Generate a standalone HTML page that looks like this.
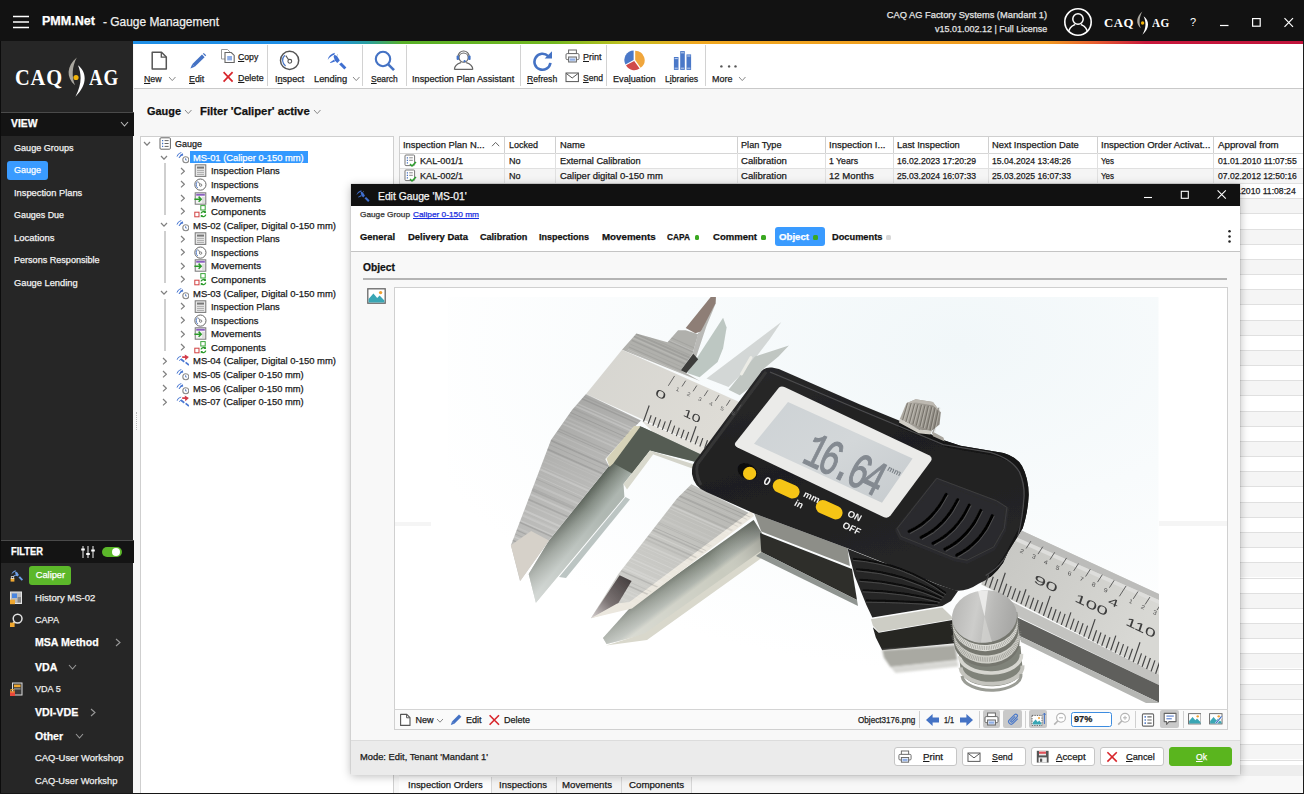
<!DOCTYPE html>
<html lang="en"><head><meta charset="utf-8"><title>PMM.Net - Gauge Management</title>
<style>
html,body{margin:0;padding:0}
body{width:1304px;height:794px;overflow:hidden;position:relative;background:#f7f7f7;font-family:"Liberation Sans", sans-serif;}
body>div,body>svg,body>span{position:absolute;display:block}
span.t{white-space:nowrap;transform-origin:0 50%;}
u{text-decoration:underline;text-underline-offset:1px}
</style></head>
<body>
<div style="left:0px;top:0px;width:1304px;height:41px;background:#121212;"></div>
<svg style="left:13px;top:15px;" width="17" height="14" viewBox="0 0 17 14"><path d="M0 1.5H16M0 7H16M0 12.5H16" stroke="#fff" stroke-width="1.6"/></svg>
<span class="t" id="t0" style="left:42px;top:13.33px;font-size:12.7px;line-height:17px;font-weight:700;color:#fff;transform:scaleX(0.9892);-webkit-text-stroke:0.25px;">PMM.Net</span>
<span class="t" id="t1" style="left:103px;top:13.84px;font-size:12.5px;line-height:16px;font-weight:400;color:#f0f0f0;transform:scaleX(0.9539);-webkit-text-stroke:0.25px;">- Gauge Management</span>
<span class="t" id="t2" style="right:257px;transform-origin:100% 50%;top:9.48px;font-size:9.3px;line-height:13px;font-weight:400;color:#e4e4e4;-webkit-text-stroke:0.25px;">CAQ AG Factory Systems (Mandant 1)</span>
<span class="t" id="t3" style="right:257px;transform-origin:100% 50%;top:23.48px;font-size:9.3px;line-height:13px;font-weight:400;color:#e4e4e4;transform:scaleX(0.9645);-webkit-text-stroke:0.25px;">v15.01.002.12 | Full License</span>
<svg style="left:1063px;top:7px;" width="30" height="30" viewBox="0 0 30 30"><defs><clipPath id="uc"><circle cx="15" cy="15" r="13"/></clipPath></defs><circle cx="15" cy="15" r="13.2" fill="none" stroke="#fff" stroke-width="1.6"/><circle cx="15" cy="12" r="5.2" fill="none" stroke="#fff" stroke-width="1.5"/><path d="M5.5 26 C6 19.5 10 18.5 12 17.5 M24.5 26 C24 19.5 20 18.5 18 17.5" fill="none" stroke="#fff" stroke-width="1.5" clip-path="url(#uc)"/></svg>
<span class="t" id="t4" style="left:1104.2px;top:13.59px;font-size:13.5px;line-height:18px;font-weight:700;color:#fff;transform:scaleX(0.9460);font-family:'Liberation Serif',serif;letter-spacing:0.5px;">CAQ</span>
<span class="t" id="t5" style="left:1151.8px;top:13.59px;font-size:13.5px;line-height:18px;font-weight:700;color:#fff;transform:scaleX(0.8282);font-family:'Liberation Serif',serif;letter-spacing:0.5px;">AG</span>
<svg style="left:1135px;top:11px;" width="16" height="24" viewBox="0 0 16 24"><path d="M7.4 0.5 C1 6 0.6 12.8 5.8 17.2 C3.8 12 4.2 6 7.4 0.5Z" fill="#aaa79f"/><path d="M8.6 5.3 C14.6 9.5 14.9 17.5 7.4 23.7 C11.2 17.5 11.4 11 8.6 5.3Z" fill="#fff"/><circle cx="7.6" cy="12" r="1.7" fill="#f3b50a"/></svg>
<span class="t" id="t6" style="left:1190px;top:14.91px;font-size:11px;line-height:15px;font-weight:400;color:#fff;font-family:'Liberation Sans',sans-serif;">?</span>
<svg style="left:1219px;top:24px;" width="11" height="3" viewBox="0 0 11 3"><path d="M1 1.5H9.5" stroke="#fff" stroke-width="1.2"/></svg>
<svg style="left:1251px;top:17px;" width="11" height="11" viewBox="0 0 11 11"><rect x="1.6" y="1.6" width="7.6" height="7.6" fill="none" stroke="#fff" stroke-width="1.2"/></svg>
<svg style="left:1283px;top:17px;" width="12" height="11" viewBox="0 0 12 11"><path d="M1.5 1.2L10 9.8M10 1.2L1.5 9.8" stroke="#fff" stroke-width="1.2"/></svg>
<div style="left:133.4px;top:41px;width:1170.6px;height:2.8px;background:linear-gradient(90deg,#1f8fe6 0%,#1f8fe6 16.8%,#2a9fa0 20%,#58b028 23%,#74b820 36%,#c0c020 42%,#f0a820 48%,#f09a20 78%,#e86030 82%,#c8183c 86.5%,#c0143c 100%);"></div>
<div style="left:0px;top:41px;width:133.4px;height:753px;background:#262626;"></div>
<div style="left:0px;top:41px;width:1px;height:753px;background:#0c0c0c;"></div>
<span class="t" id="t7" style="left:15px;top:63.34px;font-size:23.5px;line-height:28px;font-weight:700;color:#fff;transform:scaleX(0.8690);font-family:'Liberation Serif',serif;letter-spacing:1px;">CAQ</span>
<span class="t" id="t8" style="left:89px;top:63.34px;font-size:23.5px;line-height:28px;font-weight:700;color:#fff;transform:scaleX(0.8054);font-family:'Liberation Serif',serif;letter-spacing:1px;">AG</span>
<svg style="left:65px;top:56px;" width="22" height="42" viewBox="0 0 22 42"><path d="M11.8 1.5 C1.6 10 0.8 21.5 10 29.2 C6.6 21 6.8 11 11.8 1.5Z" fill="#a9a69e"/><path d="M13 9.3 C22 16 22.6 29 10.4 40.7 C16.6 29.5 17 19 13 9.3Z" fill="#fff"/><circle cx="11" cy="21.5" r="2.6" fill="#f3b50a"/></svg>
<div style="left:1px;top:112px;width:133px;height:1px;background:#4a4a4a;"></div>
<div style="left:1px;top:113px;width:133px;height:23px;background:#141414;"></div>
<span class="t" id="t9" style="left:10.5px;top:117.45px;font-size:10px;line-height:14px;font-weight:700;color:#fff;transform:scaleX(1.0367);-webkit-text-stroke:0.25px;">VIEW</span>
<svg style="left:120px;top:121px;" width="9" height="6" viewBox="0 0 9 6"><path d="M1 1 L4.5 5 L8 1" fill="none" stroke="#bbb" stroke-width="1.1"/></svg>
<div style="left:7px;top:161px;width:40.5px;height:18.5px;background:#3a9bff;border-radius:3px;"></div>
<span class="t" id="t10" style="left:14px;top:141.98px;font-size:9.3px;line-height:13px;font-weight:400;color:#f2f2f2;transform:scaleX(0.9757);-webkit-text-stroke:0.25px;">Gauge Groups</span>
<span class="t" id="t11" style="left:14px;top:163.98px;font-size:9.3px;line-height:13px;font-weight:400;color:#fff;transform:scaleX(0.9670);-webkit-text-stroke:0.25px;">Gauge</span>
<span class="t" id="t12" style="left:14px;top:186.68px;font-size:9.3px;line-height:13px;font-weight:400;color:#f2f2f2;-webkit-text-stroke:0.25px;">Inspection Plans</span>
<span class="t" id="t13" style="left:14px;top:208.98px;font-size:9.3px;line-height:13px;font-weight:400;color:#f2f2f2;transform:scaleX(0.9578);-webkit-text-stroke:0.25px;">Gauges Due</span>
<span class="t" id="t14" style="left:14px;top:231.68px;font-size:9.3px;line-height:13px;font-weight:400;color:#f2f2f2;transform:scaleX(1.0173);-webkit-text-stroke:0.25px;">Locations</span>
<span class="t" id="t15" style="left:14px;top:253.98px;font-size:9.3px;line-height:13px;font-weight:400;color:#f2f2f2;transform:scaleX(0.9743);-webkit-text-stroke:0.25px;">Persons Responsible</span>
<span class="t" id="t16" style="left:14px;top:276.68px;font-size:9.3px;line-height:13px;font-weight:400;color:#f2f2f2;-webkit-text-stroke:0.25px;">Gauge Lending</span>
<div style="left:1px;top:539.5px;width:133px;height:1px;background:#4a4a4a;"></div>
<div style="left:1px;top:540.5px;width:133px;height:22.5px;background:#141414;"></div>
<span class="t" id="t17" style="left:10.5px;top:545.45px;font-size:10px;line-height:14px;font-weight:700;color:#fff;transform:scaleX(0.9339);-webkit-text-stroke:0.25px;">FILTER</span>
<svg style="left:80px;top:545px;" width="16" height="14" viewBox="0 0 16 14"><path d="M3 1V13M8 1V13M13 1V13" stroke="#ddd" stroke-width="1.1"/><path d="M1.2 4.5H4.8M6.2 9H9.8M11.2 5.5H14.8" stroke="#fff" stroke-width="1.8"/></svg>
<div style="left:102px;top:546.5px;width:19.5px;height:10.5px;background:#5cb82a;border-radius:5.5px;"></div>
<div style="left:112px;top:547.8px;width:8px;height:8px;background:#fff;border-radius:4px;"></div>
<div style="left:29px;top:566px;width:42.3px;height:18.5px;background:#5cb82a;border-radius:3px;"></div>
<span class="t" id="t18" style="left:35.7px;top:569.28px;font-size:9.3px;line-height:13px;font-weight:400;color:#fff;-webkit-text-stroke:0.25px;">Caliper</span>
<span class="t" id="t19" style="left:35.3px;top:591.98px;font-size:9.3px;line-height:13px;font-weight:400;color:#eee;transform:scaleX(1.0254);-webkit-text-stroke:0.25px;">History MS-02</span>
<span class="t" id="t20" style="left:35.3px;top:614.48px;font-size:9.3px;line-height:13px;font-weight:400;color:#eee;transform:scaleX(0.9740);-webkit-text-stroke:0.25px;">CAPA</span>
<span class="t" id="t21" style="left:34.7px;top:635.40px;font-size:11px;line-height:15px;font-weight:700;color:#fff;transform:scaleX(0.9607);-webkit-text-stroke:0.25px;">MSA Method</span>
<svg style="left:115px;top:638px;" width="6" height="9" viewBox="0 0 6 9"><path d="M1 1 L5 4.5 L1 8" fill="none" stroke="#999" stroke-width="1.1"/></svg>
<span class="t" id="t22" style="left:34.7px;top:659.70px;font-size:11px;line-height:15px;font-weight:700;color:#fff;transform:scaleX(0.9684);-webkit-text-stroke:0.25px;">VDA</span>
<svg style="left:67.5px;top:664px;" width="9" height="6" viewBox="0 0 9 6"><path d="M1 1 L4.5 5 L8 1" fill="none" stroke="#999" stroke-width="1.1"/></svg>
<span class="t" id="t23" style="left:35.3px;top:683.48px;font-size:9.3px;line-height:13px;font-weight:400;color:#eee;transform:scaleX(0.9750);-webkit-text-stroke:0.25px;">VDA 5</span>
<span class="t" id="t24" style="left:34.7px;top:704.70px;font-size:11px;line-height:15px;font-weight:700;color:#fff;transform:scaleX(0.9703);-webkit-text-stroke:0.25px;">VDI-VDE</span>
<svg style="left:89.5px;top:707.5px;" width="6" height="9" viewBox="0 0 6 9"><path d="M1 1 L5 4.5 L1 8" fill="none" stroke="#999" stroke-width="1.1"/></svg>
<span class="t" id="t25" style="left:34.7px;top:728.70px;font-size:11px;line-height:15px;font-weight:700;color:#fff;transform:scaleX(0.9542);-webkit-text-stroke:0.25px;">Other</span>
<svg style="left:74.5px;top:733px;" width="9" height="6" viewBox="0 0 9 6"><path d="M1 1 L4.5 5 L8 1" fill="none" stroke="#999" stroke-width="1.1"/></svg>
<span class="t" id="t26" style="left:35.3px;top:752.48px;font-size:9.3px;line-height:13px;font-weight:400;color:#eee;transform:scaleX(1.0145);-webkit-text-stroke:0.25px;">CAQ-User Workshop</span>
<span class="t" id="t27" style="left:35.3px;top:774.68px;font-size:9.3px;line-height:13px;font-weight:400;color:#eee;transform:scaleX(1.0053);-webkit-text-stroke:0.25px;">CAQ-User Workshp</span>
<svg style="left:9px;top:569px;" width="15" height="14" viewBox="0 0 15 14"><g transform="translate(2,0.8) scale(0.62)" ><path d="M7.9 0.7C4 1.5 1.4 4 0.7 7.9C2.6 5.3 4.6 3.6 7.3 2.8Z" fill="#6fa0e8"/><path d="M7.2 7.6L2.9 10.5L3.6 11.1L8 9.4Z" fill="#6fa0e8"/><path d="M6.6 4.7L7.4 2.7L10 4.1L12.8 8.5L10.3 11L8 8.8Z" fill="#6fa0e8"/><path d="M12.1 12.3L14.5 10.5L19.4 15.5L17.3 17.6Z" fill="#6fa0e8"/></g><rect x="1.6" y="9" width="3.8" height="3.6" fill="#f0a830"/><rect x="2.3" y="7.6" width="2.4" height="2" fill="none" stroke="#ddd" stroke-width="0.8"/></svg>
<svg style="left:9px;top:591px;" width="15" height="14" viewBox="0 0 15 14"><rect x="1.5" y="1" width="11" height="11.5" fill="#bbb" stroke="#e6e6e6" stroke-width="1"/><rect x="3" y="2.5" width="5" height="4.5" fill="#4a86e0"/><rect x="8.6" y="6" width="3.4" height="5.5" fill="#888"/><rect x="1" y="8.6" width="5" height="4.6" fill="#f0a830"/></svg>
<svg style="left:9px;top:613px;" width="15" height="15" viewBox="0 0 15 15"><circle cx="8.6" cy="5.6" r="4.4" fill="none" stroke="#e4e4e4" stroke-width="1.5"/><path d="M5.6 8.8L2.6 12" stroke="#e4e4e4" stroke-width="1.8"/><rect x="1" y="9.6" width="4.6" height="4.4" fill="#f0a830"/></svg>
<svg style="left:9px;top:682px;" width="15" height="15" viewBox="0 0 15 15"><rect x="3.5" y="1" width="9.5" height="12" fill="#3a3a3a" stroke="#ddd" stroke-width="1"/><rect x="5" y="2.6" width="6.5" height="2.6" fill="#f0a830"/><rect x="5" y="6.4" width="6.5" height="1" fill="#aaa"/><rect x="1" y="9.4" width="5" height="4.6" fill="#e8483c"/><rect x="1.8" y="7.6" width="3.2" height="2.4" fill="none" stroke="#f0a830" stroke-width="0.9"/></svg>
<div style="left:134px;top:43.5px;width:1170px;height:44.5px;background:#fff;"></div>
<div style="left:134px;top:88px;width:1170px;height:1px;background:#c9c9c9;"></div>
<div style="left:267px;top:45px;width:1px;height:41px;background:#d2d2d2;"></div>
<div style="left:362px;top:45px;width:1px;height:41px;background:#d2d2d2;"></div>
<div style="left:406px;top:45px;width:1px;height:41px;background:#d2d2d2;"></div>
<div style="left:520px;top:45px;width:1px;height:41px;background:#d2d2d2;"></div>
<div style="left:606px;top:45px;width:1px;height:41px;background:#d2d2d2;"></div>
<div style="left:705px;top:45px;width:1px;height:41px;background:#d2d2d2;"></div>
<svg style="left:150px;top:50px;" width="19" height="21" viewBox="0 0 19 21"><path d="M2.2 2.2H11.5L16.3 7V19H2.2Z" fill="#fff" stroke="#555" stroke-width="1.5" stroke-linejoin="round"/><path d="M11.3 2.4V7.2H16.2" fill="none" stroke="#555" stroke-width="1.3"/></svg>
<span class="t" id="t28" style="left:143.5px;top:72.58px;font-size:9.3px;line-height:13px;font-weight:400;color:#1c1c1c;transform:scaleX(0.9458);-webkit-text-stroke:0.25px;"><u>N</u>ew</span>
<svg style="left:167.5px;top:76px;" width="8.5" height="5.6" viewBox="0 0 8.5 5.6"><path d="M1 1 L4.25 4.6 L7.5 1" fill="none" stroke="#888" stroke-width="1"/></svg>
<svg style="left:189px;top:52px;" width="18" height="18" viewBox="0 0 18 18"><path d="M13 2.6L15.6 5.2L5.8 14.8L3.2 12.2Z" fill="#4472c4"/><path d="M3.2 12.2L5.8 14.8L1.4 16.4Z" fill="#4472c4"/><path d="M13.8 1.8L14.8 0.9L17.2 3.3L16.3 4.3Z" fill="#4472c4"/></svg>
<span class="t" id="t29" style="left:189.3px;top:72.58px;font-size:9.3px;line-height:13px;font-weight:400;color:#1c1c1c;transform:scaleX(0.9544);-webkit-text-stroke:0.25px;"><u>E</u>dit</span>
<svg style="left:220px;top:48px;" width="16" height="16" viewBox="0 0 16 16"><path d="M1.5 1.5H7.5L9.8 3.8V11H1.5Z" fill="#fff" stroke="#999" stroke-width="1"/><path d="M5 4.5H11.3L14.2 7.4V14.5H5Z" fill="#fff" stroke="#666" stroke-width="1.1"/><rect x="7.2" y="8" width="4.8" height="4.4" fill="#8faee6"/></svg>
<span class="t" id="t30" style="left:238px;top:51.38px;font-size:9.3px;line-height:13px;font-weight:400;color:#1c1c1c;transform:scaleX(0.9347);-webkit-text-stroke:0.25px;"><u>C</u>opy</span>
<svg style="left:222px;top:71px;" width="12" height="12" viewBox="0 0 12 12"><path d="M1.6 1.2L10.6 10.6M10.6 1.2L1.6 10.6" stroke="#d8262c" stroke-width="1.7"/></svg>
<span class="t" id="t31" style="left:238px;top:72.28px;font-size:9.3px;line-height:13px;font-weight:400;color:#1c1c1c;transform:scaleX(0.9557);-webkit-text-stroke:0.25px;"><u>D</u>elete</span>
<svg style="left:279px;top:50px;" width="22" height="22" viewBox="0 0 22 22"><circle cx="10.6" cy="10.4" r="9.1" fill="#fff" stroke="#555" stroke-width="1.5"/><path d="M5.8 5.2A7 7 0 0 0 6.6 16" fill="none" stroke="#4472c4" stroke-width="1.2"/><circle cx="10.8" cy="11.3" r="1.9" fill="none" stroke="#555" stroke-width="1.1"/><path d="M9.6 9.8L6.8 5.6" stroke="#555" stroke-width="1.1"/></svg>
<span class="t" id="t32" style="left:274.7px;top:72.58px;font-size:9.3px;line-height:13px;font-weight:400;color:#1c1c1c;transform:scaleX(0.9767);-webkit-text-stroke:0.25px;">I<u>n</u>spect</span>
<svg style="left:327px;top:52px;" width="20" height="18" viewBox="0 0 20 18"><path d="M7.9 0.7C4 1.5 1.4 4 0.7 7.9C2.6 5.3 4.6 3.6 7.3 2.8Z" fill="#3f6fd0"/><path d="M7.2 7.6L2.9 10.5L3.6 11.1L8 9.4Z" fill="#3f6fd0"/><path d="M6.6 4.7L7.4 2.7L10 4.1L12.8 8.5L10.3 11L8 8.8Z" fill="#3f6fd0"/><path d="M10 3.4L10.9 2.6" stroke="#9ab" stroke-width="1"/><path d="M12.1 12.3L14.5 10.5L19.4 15.5L17.3 17.6Z" fill="#3f6fd0"/></svg>
<span class="t" id="t33" style="left:314px;top:72.58px;font-size:9.3px;line-height:13px;font-weight:400;color:#1c1c1c;-webkit-text-stroke:0.25px;">Lending</span>
<svg style="left:351.5px;top:76px;" width="8.5" height="5.6" viewBox="0 0 8.5 5.6"><path d="M1 1 L4.25 4.6 L7.5 1" fill="none" stroke="#888" stroke-width="1"/></svg>
<svg style="left:373px;top:50px;" width="24" height="22" viewBox="0 0 24 22"><circle cx="10" cy="9" r="7.2" fill="none" stroke="#4472c4" stroke-width="2.1"/><path d="M15.2 14.4L21 20.2" stroke="#4472c4" stroke-width="2.6"/></svg>
<span class="t" id="t34" style="left:370.6px;top:72.58px;font-size:9.3px;line-height:13px;font-weight:400;color:#1c1c1c;transform:scaleX(0.9094);-webkit-text-stroke:0.25px;"><u>S</u>earch</span>
<svg style="left:453px;top:50px;" width="22" height="21" viewBox="0 0 22 21"><circle cx="10.6" cy="7.6" r="4.6" fill="#fff" stroke="#666" stroke-width="1.2"/><path d="M1.4 19.4C1.6 14.6 5.6 13.4 8 12.6M19.8 19.4C19.6 14.6 15.6 13.4 13.2 12.6M1.4 19.4H19.8" fill="none" stroke="#666" stroke-width="1.2"/><path d="M5 6.6A5.6 5.6 0 0 1 16.2 6.6" fill="none" stroke="#666" stroke-width="1.1"/><rect x="3.6" y="5.6" width="2.4" height="4.4" rx="1" fill="#4472c4"/><rect x="15.2" y="5.6" width="2.4" height="4.4" rx="1" fill="#4472c4"/><circle cx="11.6" cy="11.2" r="1.1" fill="#4472c4"/></svg>
<span class="t" id="t35" style="left:412px;top:72.58px;font-size:9.3px;line-height:13px;font-weight:400;color:#1c1c1c;transform:scaleX(0.9896);-webkit-text-stroke:0.25px;">Inspection Plan Assistant</span>
<svg style="left:531px;top:50px;" width="23" height="22" viewBox="0 0 23 22"><path d="M17.2 6.2A8 8 0 1 0 19.4 12.8" fill="none" stroke="#4472c4" stroke-width="2.6"/><path d="M13.6 8.4L21 8.4L21 1.2Z" fill="#4472c4"/></svg>
<span class="t" id="t36" style="left:526.8px;top:72.58px;font-size:9.3px;line-height:13px;font-weight:400;color:#1c1c1c;transform:scaleX(0.9274);-webkit-text-stroke:0.25px;"><u>R</u>efresh</span>
<svg style="left:565px;top:49px;" width="15" height="14" viewBox="0 0 15 14"><rect x="3.6" y="1" width="7.8" height="4" fill="#fff" stroke="#666" stroke-width="1"/><rect x="1" y="4.6" width="13" height="6" rx="1.2" fill="#fff" stroke="#666" stroke-width="1"/><rect x="3.6" y="8" width="7.8" height="5" fill="#dfe8f8" stroke="#666" stroke-width="1"/><rect x="5" y="9.6" width="5" height="2" fill="#8faee6"/></svg>
<span class="t" id="t37" style="left:582.7px;top:50.98px;font-size:9.3px;line-height:13px;font-weight:400;color:#1c1c1c;transform:scaleX(0.9673);-webkit-text-stroke:0.25px;"><u>P</u>rint</span>
<svg style="left:565.4px;top:71.8px;" width="15" height="11" viewBox="0 0 15 11"><rect x="1" y="1" width="12.4" height="8.6" fill="#fff" stroke="#555" stroke-width="1"/><path d="M1.2 1.4L7.2 6L13.2 1.4" fill="none" stroke="#555" stroke-width="1"/></svg>
<span class="t" id="t38" style="left:582.7px;top:72.18px;font-size:9.3px;line-height:13px;font-weight:400;color:#1c1c1c;transform:scaleX(0.9209);-webkit-text-stroke:0.25px;"><u>S</u>end</span>
<svg style="left:624px;top:50px;" width="22" height="22" viewBox="0 0 22 22"><path d="M10.6 10.2L10.6 0.8A9.4 9.4 0 0 1 16 17.9Z" fill="#f0a63c" transform="translate(0.6,-0.1)"/><path d="M10.2 10.2L15.6 17.9A9.4 9.4 0 0 1 2 14.6Z" fill="#d04a4a" transform="translate(0,0.7)"/><path d="M10.2 10.2L2 14.6A9.4 9.4 0 0 1 10.2 0.8Z" fill="#4a78c8" transform="translate(-0.6,-0.2)"/></svg>
<span class="t" id="t39" style="left:613.1px;top:72.58px;font-size:9.3px;line-height:13px;font-weight:400;color:#1c1c1c;transform:scaleX(0.9804);-webkit-text-stroke:0.25px;">Eva<u>l</u>uation</span>
<svg style="left:673px;top:50px;" width="20" height="21" viewBox="0 0 20 21"><rect x="0.9" y="7" width="4.6" height="12.9" fill="#4a78c8"/><rect x="7.2" y="1.1" width="4.6" height="18.8" fill="#4a78c8"/><rect x="13.5" y="4.4" width="4.6" height="15.5" fill="#4a78c8"/><path d="M1.6 8.6H4.8M1.6 18.2H4.8M7.9 2.8H11.1M7.9 18.2H11.1M14.2 6H17.4M14.2 18.2H17.4" stroke="#cfdcf4" stroke-width="0.9"/></svg>
<span class="t" id="t40" style="left:665.3px;top:72.58px;font-size:9.3px;line-height:13px;font-weight:400;color:#1c1c1c;transform:scaleX(0.9279);-webkit-text-stroke:0.25px;">L<u>i</u>braries</span>
<svg style="left:719px;top:64px;" width="20" height="5" viewBox="0 0 20 5"><circle cx="2.4" cy="2.4" r="1.2" fill="#555"/><circle cx="10.1" cy="2.4" r="1.2" fill="#555"/><circle cx="16.5" cy="2.4" r="1.2" fill="#555"/></svg>
<span class="t" id="t41" style="left:711.9px;top:72.58px;font-size:9.3px;line-height:13px;font-weight:400;color:#1c1c1c;transform:scaleX(0.9628);-webkit-text-stroke:0.25px;">More</span>
<svg style="left:737.5px;top:76px;" width="8.5" height="5.6" viewBox="0 0 8.5 5.6"><path d="M1 1 L4.25 4.6 L7.5 1" fill="none" stroke="#888" stroke-width="1"/></svg>
<span class="t" id="t42" style="left:147.3px;top:103.81px;font-size:11px;line-height:15px;font-weight:700;color:#111;transform:scaleX(0.9932);-webkit-text-stroke:0.25px;">Gauge</span>
<svg style="left:183.5px;top:108.5px;" width="8.5" height="5.6" viewBox="0 0 8.5 5.6"><path d="M1 1 L4.25 4.6 L7.5 1" fill="none" stroke="#888" stroke-width="1"/></svg>
<span class="t" id="t43" style="left:200.3px;top:103.81px;font-size:11px;line-height:15px;font-weight:700;color:#111;transform:scaleX(1.0279);-webkit-text-stroke:0.25px;">Filter 'Caliper' active</span>
<svg style="left:312.5px;top:108.5px;" width="8.5" height="5.6" viewBox="0 0 8.5 5.6"><path d="M1 1 L4.25 4.6 L7.5 1" fill="none" stroke="#888" stroke-width="1"/></svg>
<div style="left:140px;top:136px;width:254px;height:658px;background:#fff;border:1px solid #cfcfcf;box-sizing:border-box;"></div>
<div style="left:136px;top:412px;width:1px;height:18px;background:transparent;border-left:1px dotted #bbb;"></div>
<div style="left:164.4px;top:163px;width:1.3px;height:52px;background:#cfcfcf;"></div>
<div style="left:164.4px;top:231px;width:1.3px;height:52px;background:#cfcfcf;"></div>
<div style="left:164.4px;top:299px;width:1.3px;height:52px;background:#cfcfcf;"></div>
<div style="left:190px;top:151.2px;width:118px;height:12px;background:#3399ff;"></div>
<svg style="left:143px;top:141.0px;" width="8" height="5.2" viewBox="0 0 8 5.2"><path d="M1 1 L4.0 4.2 L7 1" fill="none" stroke="#808080" stroke-width="1.25"/></svg>
<svg style="left:158.5px;top:137.2px;" width="13" height="13" viewBox="0 0 13 13"><rect x="1" y="0.8" width="10.4" height="11.4" rx="1" fill="#fff" stroke="#666" stroke-width="1"/><path d="M3 3.6H4.2M3 6.5H4.2M3 9.4H4.2" stroke="#4472c4" stroke-width="1.4"/><path d="M5.6 3.6H9.6M5.6 6.5H9.6M5.6 9.4H9.6" stroke="#666" stroke-width="1"/></svg>
<span class="t" id="t44" style="left:175.4px;top:138.18px;font-size:9.3px;line-height:13px;font-weight:400;color:#1a1a1a;transform:scaleX(0.9670);-webkit-text-stroke:0.25px;">Gauge</span>
<svg style="left:160.3px;top:154.58px;" width="8" height="5.2" viewBox="0 0 8 5.2"><path d="M1 1 L4.0 4.2 L7 1" fill="none" stroke="#808080" stroke-width="1.25"/></svg>
<svg style="left:175.5px;top:150.78px;" width="13" height="13" viewBox="0 0 13 13"><path d="M5.5 0.9C3 1.5 1.2 3.1 0.5 5.9L1.7 5.2C2.5 3.5 3.7 2.6 5.2 2.1Z" fill="#4a78d2"/><path d="M6.9 2.3L4.6 3.6L2.5 7L3.5 7.1L5.3 5L7.2 4.5Z" fill="#4a78d2"/><circle cx="9.8" cy="8.8" r="3" fill="#fff" stroke="#8a8a8a" stroke-width="1.1"/><path d="M9.6 7.2V9H10.8" fill="none" stroke="#5a7ec0" stroke-width="0.9"/></svg>
<span class="t" id="t45" style="left:193px;top:151.76px;font-size:9.3px;line-height:13px;font-weight:400;color:#fff;transform:scaleX(1.0059);-webkit-text-stroke:0.25px;">MS-01 (Caliper 0-150 mm)</span>
<svg style="left:180.0px;top:166.66px;" width="5.4" height="8.4" viewBox="0 0 5.4 8.4"><path d="M1 1 L4.4 4.2 L1 7.4" fill="none" stroke="#808080" stroke-width="1.25"/></svg>
<svg style="left:193.5px;top:164.35999999999999px;" width="13" height="13" viewBox="0 0 13 13"><rect x="1.2" y="0.8" width="10.6" height="11.6" fill="#e8e8e8" stroke="#777" stroke-width="1"/><rect x="3" y="2.6" width="7" height="2" fill="#777"/><path d="M3 6.4H10M3 8.4H10M3 10.4H10" stroke="#aaa" stroke-width="1"/></svg>
<span class="t" id="t46" style="left:210.5px;top:165.34px;font-size:9.3px;line-height:13px;font-weight:400;color:#1a1a1a;transform:scaleX(1.0083);-webkit-text-stroke:0.25px;">Inspection Plans</span>
<svg style="left:180.0px;top:180.24px;" width="5.4" height="8.4" viewBox="0 0 5.4 8.4"><path d="M1 1 L4.4 4.2 L1 7.4" fill="none" stroke="#808080" stroke-width="1.25"/></svg>
<svg style="left:193.5px;top:177.94px;" width="13" height="13" viewBox="0 0 13 13"><circle cx="6.4" cy="6.6" r="5.6" fill="#fff" stroke="#666" stroke-width="1"/><path d="M3.4 3.6A4.4 4.4 0 0 0 3.8 10" fill="none" stroke="#4472c4" stroke-width="0.9"/><circle cx="6.6" cy="7.1" r="1.2" fill="none" stroke="#666" stroke-width="0.8"/><path d="M5.8 6.2L4.2 3.6" stroke="#666" stroke-width="0.8"/></svg>
<span class="t" id="t47" style="left:210.5px;top:178.92px;font-size:9.3px;line-height:13px;font-weight:400;color:#1a1a1a;transform:scaleX(1.0100);-webkit-text-stroke:0.25px;">Inspections</span>
<svg style="left:180.0px;top:193.82px;" width="5.4" height="8.4" viewBox="0 0 5.4 8.4"><path d="M1 1 L4.4 4.2 L1 7.4" fill="none" stroke="#808080" stroke-width="1.25"/></svg>
<svg style="left:193.5px;top:191.51999999999998px;" width="13" height="13" viewBox="0 0 13 13"><rect x="1.2" y="0.8" width="10.6" height="11.4" fill="#f4f4f4" stroke="#777" stroke-width="1"/><rect x="2.2" y="1.8" width="8.6" height="1.9" fill="#8a5fc0"/><rect x="8" y="5" width="2.8" height="6" fill="#ddd"/><path d="M0.4 7.2H7M4.6 4.6L7.2 7.2L4.6 9.8" fill="none" stroke="#2a9a2a" stroke-width="1.5"/></svg>
<span class="t" id="t48" style="left:210.5px;top:192.50px;font-size:9.3px;line-height:13px;font-weight:400;color:#1a1a1a;transform:scaleX(1.0403);-webkit-text-stroke:0.25px;">Movements</span>
<svg style="left:180.0px;top:207.4px;" width="5.4" height="8.4" viewBox="0 0 5.4 8.4"><path d="M1 1 L4.4 4.2 L1 7.4" fill="none" stroke="#808080" stroke-width="1.25"/></svg>
<svg style="left:193.5px;top:205.1px;" width="13" height="13" viewBox="0 0 13 13"><rect x="6.8" y="0.6" width="4.4" height="4.4" fill="#fff" stroke="#3aa63a" stroke-width="1"/><rect x="0.8" y="7.2" width="4.2" height="4.6" fill="#fff" stroke="#d04040" stroke-width="1"/><path d="M7 8.4A2.6 2.6 0 0 1 11.6 7.6M11.8 9.6A2.6 2.6 0 0 1 7.2 10.6" fill="none" stroke="#2a9a2a" stroke-width="1.3"/><path d="M11.8 5.6V8H9.6ZM6.8 12.4V10H9Z" fill="#2a9a2a"/></svg>
<span class="t" id="t49" style="left:210.5px;top:206.08px;font-size:9.3px;line-height:13px;font-weight:400;color:#1a1a1a;transform:scaleX(1.0395);-webkit-text-stroke:0.25px;">Components</span>
<svg style="left:160.3px;top:222.48000000000002px;" width="8" height="5.2" viewBox="0 0 8 5.2"><path d="M1 1 L4.0 4.2 L7 1" fill="none" stroke="#808080" stroke-width="1.25"/></svg>
<svg style="left:175.5px;top:218.68px;" width="13" height="13" viewBox="0 0 13 13"><path d="M5.5 0.9C3 1.5 1.2 3.1 0.5 5.9L1.7 5.2C2.5 3.5 3.7 2.6 5.2 2.1Z" fill="#4a78d2"/><path d="M6.9 2.3L4.6 3.6L2.5 7L3.5 7.1L5.3 5L7.2 4.5Z" fill="#4a78d2"/><circle cx="9.8" cy="8.8" r="3" fill="#fff" stroke="#8a8a8a" stroke-width="1.1"/><path d="M9.6 7.2V9H10.8" fill="none" stroke="#5a7ec0" stroke-width="0.9"/></svg>
<span class="t" id="t50" style="left:193px;top:219.66px;font-size:9.3px;line-height:13px;font-weight:400;color:#1a1a1a;transform:scaleX(1.0176);-webkit-text-stroke:0.25px;">MS-02 (Caliper, Digital 0-150 mm)</span>
<svg style="left:180.0px;top:234.56px;" width="5.4" height="8.4" viewBox="0 0 5.4 8.4"><path d="M1 1 L4.4 4.2 L1 7.4" fill="none" stroke="#808080" stroke-width="1.25"/></svg>
<svg style="left:193.5px;top:232.26px;" width="13" height="13" viewBox="0 0 13 13"><rect x="1.2" y="0.8" width="10.6" height="11.6" fill="#e8e8e8" stroke="#777" stroke-width="1"/><rect x="3" y="2.6" width="7" height="2" fill="#777"/><path d="M3 6.4H10M3 8.4H10M3 10.4H10" stroke="#aaa" stroke-width="1"/></svg>
<span class="t" id="t51" style="left:210.5px;top:233.24px;font-size:9.3px;line-height:13px;font-weight:400;color:#1a1a1a;transform:scaleX(1.0083);-webkit-text-stroke:0.25px;">Inspection Plans</span>
<svg style="left:180.0px;top:248.14px;" width="5.4" height="8.4" viewBox="0 0 5.4 8.4"><path d="M1 1 L4.4 4.2 L1 7.4" fill="none" stroke="#808080" stroke-width="1.25"/></svg>
<svg style="left:193.5px;top:245.83999999999997px;" width="13" height="13" viewBox="0 0 13 13"><circle cx="6.4" cy="6.6" r="5.6" fill="#fff" stroke="#666" stroke-width="1"/><path d="M3.4 3.6A4.4 4.4 0 0 0 3.8 10" fill="none" stroke="#4472c4" stroke-width="0.9"/><circle cx="6.6" cy="7.1" r="1.2" fill="none" stroke="#666" stroke-width="0.8"/><path d="M5.8 6.2L4.2 3.6" stroke="#666" stroke-width="0.8"/></svg>
<span class="t" id="t52" style="left:210.5px;top:246.82px;font-size:9.3px;line-height:13px;font-weight:400;color:#1a1a1a;transform:scaleX(1.0100);-webkit-text-stroke:0.25px;">Inspections</span>
<svg style="left:180.0px;top:261.72px;" width="5.4" height="8.4" viewBox="0 0 5.4 8.4"><path d="M1 1 L4.4 4.2 L1 7.4" fill="none" stroke="#808080" stroke-width="1.25"/></svg>
<svg style="left:193.5px;top:259.42px;" width="13" height="13" viewBox="0 0 13 13"><rect x="1.2" y="0.8" width="10.6" height="11.4" fill="#f4f4f4" stroke="#777" stroke-width="1"/><rect x="2.2" y="1.8" width="8.6" height="1.9" fill="#8a5fc0"/><rect x="8" y="5" width="2.8" height="6" fill="#ddd"/><path d="M0.4 7.2H7M4.6 4.6L7.2 7.2L4.6 9.8" fill="none" stroke="#2a9a2a" stroke-width="1.5"/></svg>
<span class="t" id="t53" style="left:210.5px;top:260.40px;font-size:9.3px;line-height:13px;font-weight:400;color:#1a1a1a;transform:scaleX(1.0403);-webkit-text-stroke:0.25px;">Movements</span>
<svg style="left:180.0px;top:275.3px;" width="5.4" height="8.4" viewBox="0 0 5.4 8.4"><path d="M1 1 L4.4 4.2 L1 7.4" fill="none" stroke="#808080" stroke-width="1.25"/></svg>
<svg style="left:193.5px;top:273.0px;" width="13" height="13" viewBox="0 0 13 13"><rect x="6.8" y="0.6" width="4.4" height="4.4" fill="#fff" stroke="#3aa63a" stroke-width="1"/><rect x="0.8" y="7.2" width="4.2" height="4.6" fill="#fff" stroke="#d04040" stroke-width="1"/><path d="M7 8.4A2.6 2.6 0 0 1 11.6 7.6M11.8 9.6A2.6 2.6 0 0 1 7.2 10.6" fill="none" stroke="#2a9a2a" stroke-width="1.3"/><path d="M11.8 5.6V8H9.6ZM6.8 12.4V10H9Z" fill="#2a9a2a"/></svg>
<span class="t" id="t54" style="left:210.5px;top:273.98px;font-size:9.3px;line-height:13px;font-weight:400;color:#1a1a1a;transform:scaleX(1.0395);-webkit-text-stroke:0.25px;">Components</span>
<svg style="left:160.3px;top:290.38px;" width="8" height="5.2" viewBox="0 0 8 5.2"><path d="M1 1 L4.0 4.2 L7 1" fill="none" stroke="#808080" stroke-width="1.25"/></svg>
<svg style="left:175.5px;top:286.58px;" width="13" height="13" viewBox="0 0 13 13"><path d="M5.5 0.9C3 1.5 1.2 3.1 0.5 5.9L1.7 5.2C2.5 3.5 3.7 2.6 5.2 2.1Z" fill="#4a78d2"/><path d="M6.9 2.3L4.6 3.6L2.5 7L3.5 7.1L5.3 5L7.2 4.5Z" fill="#4a78d2"/><circle cx="9.8" cy="8.8" r="3" fill="#fff" stroke="#8a8a8a" stroke-width="1.1"/><path d="M9.6 7.2V9H10.8" fill="none" stroke="#5a7ec0" stroke-width="0.9"/></svg>
<span class="t" id="t55" style="left:193px;top:287.56px;font-size:9.3px;line-height:13px;font-weight:400;color:#1a1a1a;transform:scaleX(1.0176);-webkit-text-stroke:0.25px;">MS-03 (Caliper, Digital 0-150 mm)</span>
<svg style="left:180.0px;top:302.46000000000004px;" width="5.4" height="8.4" viewBox="0 0 5.4 8.4"><path d="M1 1 L4.4 4.2 L1 7.4" fill="none" stroke="#808080" stroke-width="1.25"/></svg>
<svg style="left:193.5px;top:300.16px;" width="13" height="13" viewBox="0 0 13 13"><rect x="1.2" y="0.8" width="10.6" height="11.6" fill="#e8e8e8" stroke="#777" stroke-width="1"/><rect x="3" y="2.6" width="7" height="2" fill="#777"/><path d="M3 6.4H10M3 8.4H10M3 10.4H10" stroke="#aaa" stroke-width="1"/></svg>
<span class="t" id="t56" style="left:210.5px;top:301.14px;font-size:9.3px;line-height:13px;font-weight:400;color:#1a1a1a;transform:scaleX(1.0083);-webkit-text-stroke:0.25px;">Inspection Plans</span>
<svg style="left:180.0px;top:316.03999999999996px;" width="5.4" height="8.4" viewBox="0 0 5.4 8.4"><path d="M1 1 L4.4 4.2 L1 7.4" fill="none" stroke="#808080" stroke-width="1.25"/></svg>
<svg style="left:193.5px;top:313.73999999999995px;" width="13" height="13" viewBox="0 0 13 13"><circle cx="6.4" cy="6.6" r="5.6" fill="#fff" stroke="#666" stroke-width="1"/><path d="M3.4 3.6A4.4 4.4 0 0 0 3.8 10" fill="none" stroke="#4472c4" stroke-width="0.9"/><circle cx="6.6" cy="7.1" r="1.2" fill="none" stroke="#666" stroke-width="0.8"/><path d="M5.8 6.2L4.2 3.6" stroke="#666" stroke-width="0.8"/></svg>
<span class="t" id="t57" style="left:210.5px;top:314.72px;font-size:9.3px;line-height:13px;font-weight:400;color:#1a1a1a;transform:scaleX(1.0100);-webkit-text-stroke:0.25px;">Inspections</span>
<svg style="left:180.0px;top:329.62px;" width="5.4" height="8.4" viewBox="0 0 5.4 8.4"><path d="M1 1 L4.4 4.2 L1 7.4" fill="none" stroke="#808080" stroke-width="1.25"/></svg>
<svg style="left:193.5px;top:327.32px;" width="13" height="13" viewBox="0 0 13 13"><rect x="1.2" y="0.8" width="10.6" height="11.4" fill="#f4f4f4" stroke="#777" stroke-width="1"/><rect x="2.2" y="1.8" width="8.6" height="1.9" fill="#8a5fc0"/><rect x="8" y="5" width="2.8" height="6" fill="#ddd"/><path d="M0.4 7.2H7M4.6 4.6L7.2 7.2L4.6 9.8" fill="none" stroke="#2a9a2a" stroke-width="1.5"/></svg>
<span class="t" id="t58" style="left:210.5px;top:328.30px;font-size:9.3px;line-height:13px;font-weight:400;color:#1a1a1a;transform:scaleX(1.0403);-webkit-text-stroke:0.25px;">Movements</span>
<svg style="left:180.0px;top:343.2px;" width="5.4" height="8.4" viewBox="0 0 5.4 8.4"><path d="M1 1 L4.4 4.2 L1 7.4" fill="none" stroke="#808080" stroke-width="1.25"/></svg>
<svg style="left:193.5px;top:340.9px;" width="13" height="13" viewBox="0 0 13 13"><rect x="6.8" y="0.6" width="4.4" height="4.4" fill="#fff" stroke="#3aa63a" stroke-width="1"/><rect x="0.8" y="7.2" width="4.2" height="4.6" fill="#fff" stroke="#d04040" stroke-width="1"/><path d="M7 8.4A2.6 2.6 0 0 1 11.6 7.6M11.8 9.6A2.6 2.6 0 0 1 7.2 10.6" fill="none" stroke="#2a9a2a" stroke-width="1.3"/><path d="M11.8 5.6V8H9.6ZM6.8 12.4V10H9Z" fill="#2a9a2a"/></svg>
<span class="t" id="t59" style="left:210.5px;top:341.88px;font-size:9.3px;line-height:13px;font-weight:400;color:#1a1a1a;transform:scaleX(1.0395);-webkit-text-stroke:0.25px;">Components</span>
<svg style="left:161.8px;top:356.78px;" width="5.4" height="8.4" viewBox="0 0 5.4 8.4"><path d="M1 1 L4.4 4.2 L1 7.4" fill="none" stroke="#808080" stroke-width="1.25"/></svg>
<svg style="left:175.5px;top:354.47999999999996px;" width="13" height="13" viewBox="0 0 13 13"><path d="M5.3 1.5C3 2.2 1.3 3.6 0.6 5.9L1.7 5.4C2.5 3.9 3.6 3.1 5 2.6Z" fill="#4a78d2"/><path d="M4.7 5L8.3 7.7M9.6 8.4L13 11" stroke="#4a78d2" stroke-width="1.7"/><path d="M3.2 6.6L4.8 5.4" stroke="#4a78d2" stroke-width="1"/><path d="M6.2 3.1H9.6" stroke="#d23a48" stroke-width="1.7"/><path d="M8.7 0.4L12.9 3.1L9.3 6.2Z" fill="#d23a48"/></svg>
<span class="t" id="t60" style="left:193px;top:355.46px;font-size:9.3px;line-height:13px;font-weight:400;color:#1a1a1a;transform:scaleX(1.0176);-webkit-text-stroke:0.25px;">MS-04 (Caliper, Digital 0-150 mm)</span>
<svg style="left:161.8px;top:370.36px;" width="5.4" height="8.4" viewBox="0 0 5.4 8.4"><path d="M1 1 L4.4 4.2 L1 7.4" fill="none" stroke="#808080" stroke-width="1.25"/></svg>
<svg style="left:175.5px;top:368.06px;" width="13" height="13" viewBox="0 0 13 13"><path d="M5.5 0.9C3 1.5 1.2 3.1 0.5 5.9L1.7 5.2C2.5 3.5 3.7 2.6 5.2 2.1Z" fill="#4a78d2"/><path d="M6.9 2.3L4.6 3.6L2.5 7L3.5 7.1L5.3 5L7.2 4.5Z" fill="#4a78d2"/><circle cx="9.8" cy="8.8" r="3" fill="#fff" stroke="#8a8a8a" stroke-width="1.1"/><path d="M9.6 7.2V9H10.8" fill="none" stroke="#5a7ec0" stroke-width="0.9"/></svg>
<span class="t" id="t61" style="left:193px;top:369.04px;font-size:9.3px;line-height:13px;font-weight:400;color:#1a1a1a;transform:scaleX(1.0059);-webkit-text-stroke:0.25px;">MS-05 (Caliper 0-150 mm)</span>
<svg style="left:161.8px;top:383.94px;" width="5.4" height="8.4" viewBox="0 0 5.4 8.4"><path d="M1 1 L4.4 4.2 L1 7.4" fill="none" stroke="#808080" stroke-width="1.25"/></svg>
<svg style="left:175.5px;top:381.64px;" width="13" height="13" viewBox="0 0 13 13"><path d="M5.5 0.9C3 1.5 1.2 3.1 0.5 5.9L1.7 5.2C2.5 3.5 3.7 2.6 5.2 2.1Z" fill="#4a78d2"/><path d="M6.9 2.3L4.6 3.6L2.5 7L3.5 7.1L5.3 5L7.2 4.5Z" fill="#4a78d2"/><circle cx="9.8" cy="8.8" r="3" fill="#fff" stroke="#8a8a8a" stroke-width="1.1"/><path d="M9.6 7.2V9H10.8" fill="none" stroke="#5a7ec0" stroke-width="0.9"/></svg>
<span class="t" id="t62" style="left:193px;top:382.62px;font-size:9.3px;line-height:13px;font-weight:400;color:#1a1a1a;transform:scaleX(1.0059);-webkit-text-stroke:0.25px;">MS-06 (Caliper 0-150 mm)</span>
<svg style="left:161.8px;top:397.52px;" width="5.4" height="8.4" viewBox="0 0 5.4 8.4"><path d="M1 1 L4.4 4.2 L1 7.4" fill="none" stroke="#808080" stroke-width="1.25"/></svg>
<svg style="left:175.5px;top:395.21999999999997px;" width="13" height="13" viewBox="0 0 13 13"><path d="M5.3 1.5C3 2.2 1.3 3.6 0.6 5.9L1.7 5.4C2.5 3.9 3.6 3.1 5 2.6Z" fill="#4a78d2"/><path d="M4.7 5L8.3 7.7M9.6 8.4L13 11" stroke="#4a78d2" stroke-width="1.7"/><path d="M3.2 6.6L4.8 5.4" stroke="#4a78d2" stroke-width="1"/><path d="M6.2 3.1H9.6" stroke="#d23a48" stroke-width="1.7"/><path d="M8.7 0.4L12.9 3.1L9.3 6.2Z" fill="#d23a48"/></svg>
<span class="t" id="t63" style="left:193px;top:396.20px;font-size:9.3px;line-height:13px;font-weight:400;color:#1a1a1a;transform:scaleX(1.0059);-webkit-text-stroke:0.25px;">MS-07 (Caliper 0-150 mm)</span>
<div style="left:399px;top:136px;width:905px;height:629px;background:#fff;border-left:1px solid #cfcfcf;border-top:1px solid #cfcfcf;box-sizing:border-box;"></div>
<div style="left:400px;top:152.5px;width:904px;height:1px;background:#d6d6d6;"></div>
<div style="left:400px;top:168.5px;width:904px;height:14.2px;background:#f5f5f5;"></div>
<div style="left:400px;top:167.5px;width:904px;height:1px;background:#e0e0e0;"></div>
<div style="left:400px;top:183.0px;width:904px;height:1px;background:#e0e0e0;"></div>
<div style="left:400px;top:199.0px;width:904px;height:14.2px;background:#f5f5f5;"></div>
<div style="left:400px;top:198.0px;width:904px;height:1px;background:#e0e0e0;"></div>
<div style="left:400px;top:213.0px;width:904px;height:1px;background:#e0e0e0;"></div>
<div style="left:400px;top:229.5px;width:904px;height:14.2px;background:#f5f5f5;"></div>
<div style="left:400px;top:228.5px;width:904px;height:1px;background:#e0e0e0;"></div>
<div style="left:400px;top:243.5px;width:904px;height:1px;background:#e0e0e0;"></div>
<div style="left:400px;top:259.5px;width:904px;height:14.2px;background:#f5f5f5;"></div>
<div style="left:400px;top:258.5px;width:904px;height:1px;background:#e0e0e0;"></div>
<div style="left:400px;top:274.0px;width:904px;height:1px;background:#e0e0e0;"></div>
<div style="left:400px;top:290.0px;width:904px;height:14.2px;background:#f5f5f5;"></div>
<div style="left:400px;top:289.0px;width:904px;height:1px;background:#e0e0e0;"></div>
<div style="left:400px;top:304.0px;width:904px;height:1px;background:#e0e0e0;"></div>
<div style="left:400px;top:320.5px;width:904px;height:14.2px;background:#f5f5f5;"></div>
<div style="left:400px;top:319.5px;width:904px;height:1px;background:#e0e0e0;"></div>
<div style="left:400px;top:334.5px;width:904px;height:1px;background:#e0e0e0;"></div>
<div style="left:400px;top:350.5px;width:904px;height:14.2px;background:#f5f5f5;"></div>
<div style="left:400px;top:349.5px;width:904px;height:1px;background:#e0e0e0;"></div>
<div style="left:400px;top:365.0px;width:904px;height:1px;background:#e0e0e0;"></div>
<div style="left:400px;top:381.0px;width:904px;height:14.2px;background:#f5f5f5;"></div>
<div style="left:400px;top:380.0px;width:904px;height:1px;background:#e0e0e0;"></div>
<div style="left:400px;top:395.0px;width:904px;height:1px;background:#e0e0e0;"></div>
<div style="left:400px;top:411.5px;width:904px;height:14.2px;background:#f5f5f5;"></div>
<div style="left:400px;top:410.5px;width:904px;height:1px;background:#e0e0e0;"></div>
<div style="left:400px;top:425.5px;width:904px;height:1px;background:#e0e0e0;"></div>
<div style="left:400px;top:441.5px;width:904px;height:14.2px;background:#f5f5f5;"></div>
<div style="left:400px;top:440.5px;width:904px;height:1px;background:#e0e0e0;"></div>
<div style="left:400px;top:456.0px;width:904px;height:1px;background:#e0e0e0;"></div>
<div style="left:400px;top:472.0px;width:904px;height:14.2px;background:#f5f5f5;"></div>
<div style="left:400px;top:471.0px;width:904px;height:1px;background:#e0e0e0;"></div>
<div style="left:400px;top:486.0px;width:904px;height:1px;background:#e0e0e0;"></div>
<div style="left:400px;top:502.5px;width:904px;height:14.2px;background:#f5f5f5;"></div>
<div style="left:400px;top:501.5px;width:904px;height:1px;background:#e0e0e0;"></div>
<div style="left:400px;top:516.5px;width:904px;height:1px;background:#e0e0e0;"></div>
<div style="left:400px;top:533.0px;width:904px;height:14.2px;background:#f5f5f5;"></div>
<div style="left:400px;top:532.0px;width:904px;height:1px;background:#e0e0e0;"></div>
<div style="left:400px;top:547.0px;width:904px;height:1px;background:#e0e0e0;"></div>
<div style="left:400px;top:563.0px;width:904px;height:14.2px;background:#f5f5f5;"></div>
<div style="left:400px;top:562.0px;width:904px;height:1px;background:#e0e0e0;"></div>
<div style="left:400px;top:577.5px;width:904px;height:1px;background:#e0e0e0;"></div>
<div style="left:400px;top:593.5px;width:904px;height:14.2px;background:#f5f5f5;"></div>
<div style="left:400px;top:592.5px;width:904px;height:1px;background:#e0e0e0;"></div>
<div style="left:400px;top:607.5px;width:904px;height:1px;background:#e0e0e0;"></div>
<div style="left:400px;top:624.0px;width:904px;height:14.2px;background:#f5f5f5;"></div>
<div style="left:400px;top:623.0px;width:904px;height:1px;background:#e0e0e0;"></div>
<div style="left:400px;top:638.0px;width:904px;height:1px;background:#e0e0e0;"></div>
<div style="left:400px;top:654.0px;width:904px;height:14.2px;background:#f5f5f5;"></div>
<div style="left:400px;top:653.0px;width:904px;height:1px;background:#e0e0e0;"></div>
<div style="left:400px;top:668.5px;width:904px;height:1px;background:#e0e0e0;"></div>
<div style="left:400px;top:684.5px;width:904px;height:14.2px;background:#f5f5f5;"></div>
<div style="left:400px;top:683.5px;width:904px;height:1px;background:#e0e0e0;"></div>
<div style="left:400px;top:698.5px;width:904px;height:1px;background:#e0e0e0;"></div>
<div style="left:400px;top:715.0px;width:904px;height:14.2px;background:#f5f5f5;"></div>
<div style="left:400px;top:714.0px;width:904px;height:1px;background:#e0e0e0;"></div>
<div style="left:400px;top:729.0px;width:904px;height:1px;background:#e0e0e0;"></div>
<div style="left:400px;top:745.0px;width:904px;height:14.2px;background:#f5f5f5;"></div>
<div style="left:400px;top:744.0px;width:904px;height:1px;background:#e0e0e0;"></div>
<div style="left:400px;top:759.5px;width:904px;height:1px;background:#e0e0e0;"></div>
<div style="left:504.0px;top:137px;width:1px;height:628px;background:#e0e0e0;"></div>
<div style="left:504.0px;top:137px;width:1px;height:16px;background:#d0d0d0;"></div>
<div style="left:555.0px;top:137px;width:1px;height:628px;background:#e0e0e0;"></div>
<div style="left:555.0px;top:137px;width:1px;height:16px;background:#d0d0d0;"></div>
<div style="left:736.9px;top:137px;width:1px;height:628px;background:#e0e0e0;"></div>
<div style="left:736.9px;top:137px;width:1px;height:16px;background:#d0d0d0;"></div>
<div style="left:825.1px;top:137px;width:1px;height:628px;background:#e0e0e0;"></div>
<div style="left:825.1px;top:137px;width:1px;height:16px;background:#d0d0d0;"></div>
<div style="left:892.9px;top:137px;width:1px;height:628px;background:#e0e0e0;"></div>
<div style="left:892.9px;top:137px;width:1px;height:16px;background:#d0d0d0;"></div>
<div style="left:988.1px;top:137px;width:1px;height:628px;background:#e0e0e0;"></div>
<div style="left:988.1px;top:137px;width:1px;height:16px;background:#d0d0d0;"></div>
<div style="left:1096.8px;top:137px;width:1px;height:628px;background:#e0e0e0;"></div>
<div style="left:1096.8px;top:137px;width:1px;height:16px;background:#d0d0d0;"></div>
<div style="left:1213.2px;top:137px;width:1px;height:628px;background:#e0e0e0;"></div>
<div style="left:1213.2px;top:137px;width:1px;height:16px;background:#d0d0d0;"></div>
<span class="t" id="t64" style="left:403px;top:138.88px;font-size:9.3px;line-height:13px;font-weight:400;color:#1a1a1a;transform:scaleX(1.0121);-webkit-text-stroke:0.25px;">Inspection Plan N...</span>
<span class="t" id="t65" style="left:509px;top:138.88px;font-size:9.3px;line-height:13px;font-weight:400;color:#1a1a1a;transform:scaleX(0.9672);-webkit-text-stroke:0.25px;">Locked</span>
<span class="t" id="t66" style="left:560px;top:138.88px;font-size:9.3px;line-height:13px;font-weight:400;color:#1a1a1a;transform:scaleX(1.0076);-webkit-text-stroke:0.25px;">Name</span>
<span class="t" id="t67" style="left:741px;top:138.88px;font-size:9.3px;line-height:13px;font-weight:400;color:#1a1a1a;transform:scaleX(0.9833);-webkit-text-stroke:0.25px;">Plan Type</span>
<span class="t" id="t68" style="left:829.2px;top:138.88px;font-size:9.3px;line-height:13px;font-weight:400;color:#1a1a1a;transform:scaleX(1.0199);-webkit-text-stroke:0.25px;">Inspection I...</span>
<span class="t" id="t69" style="left:896.9px;top:138.88px;font-size:9.3px;line-height:13px;font-weight:400;color:#1a1a1a;transform:scaleX(1.0040);-webkit-text-stroke:0.25px;">Last Inspection</span>
<span class="t" id="t70" style="left:992.1px;top:138.88px;font-size:9.3px;line-height:13px;font-weight:400;color:#1a1a1a;transform:scaleX(1.0056);-webkit-text-stroke:0.25px;">Next Inspection Date</span>
<span class="t" id="t71" style="left:1100.8px;top:138.88px;font-size:9.3px;line-height:13px;font-weight:400;color:#1a1a1a;transform:scaleX(1.0267);-webkit-text-stroke:0.25px;">Inspection Order Activat...</span>
<span class="t" id="t72" style="left:1217.9px;top:138.88px;font-size:9.3px;line-height:13px;font-weight:400;color:#1a1a1a;transform:scaleX(1.0488);-webkit-text-stroke:0.25px;">Approval from</span>
<svg style="left:491px;top:141px;" width="10" height="7" viewBox="0 0 10 7"><path d="M1 5.2L4.6 1.4L8.2 5.2" fill="none" stroke="#666" stroke-width="1"/></svg>
<span class="t" id="t73" style="left:1216.6px;top:184.98px;font-size:9.3px;line-height:13px;font-weight:400;color:#1a1a1a;transform:scaleX(0.9300);-webkit-text-stroke:0.25px;">01.01.2010 11:08:24</span>
<svg style="left:403.6px;top:153.79999999999998px;" width="14" height="14" viewBox="0 0 14 14"><rect x="1" y="1" width="9.6" height="10.6" rx="1" fill="#fff" stroke="#777" stroke-width="1"/><path d="M2.8 3.8H4M2.8 6.3H4M2.8 8.8H4" stroke="#4472c4" stroke-width="1.2"/><path d="M5.2 3.8H8.8M5.2 6.3H8.8" stroke="#888" stroke-width="1"/><path d="M6 10L8 12L12 8" fill="none" stroke="#2aa02a" stroke-width="1.5"/></svg>
<span class="t" id="t74" style="left:419.6px;top:154.58px;font-size:9.3px;line-height:13px;font-weight:400;color:#1a1a1a;transform:scaleX(0.9832);-webkit-text-stroke:0.25px;">KAL-001/1</span>
<span class="t" id="t75" style="left:509px;top:154.58px;font-size:9.3px;line-height:13px;font-weight:400;color:#1a1a1a;transform:scaleX(0.9756);-webkit-text-stroke:0.25px;">No</span>
<span class="t" id="t76" style="left:560px;top:154.58px;font-size:9.3px;line-height:13px;font-weight:400;color:#1a1a1a;transform:scaleX(0.9933);-webkit-text-stroke:0.25px;">External Calibration</span>
<span class="t" id="t77" style="left:741px;top:154.58px;font-size:9.3px;line-height:13px;font-weight:400;color:#1a1a1a;transform:scaleX(1.0303);-webkit-text-stroke:0.25px;">Calibration</span>
<span class="t" id="t78" style="left:829.2px;top:154.58px;font-size:9.3px;line-height:13px;font-weight:400;color:#1a1a1a;transform:scaleX(0.9345);-webkit-text-stroke:0.25px;">1 Years</span>
<span class="t" id="t79" style="left:896.9px;top:154.58px;font-size:9.3px;line-height:13px;font-weight:400;color:#1a1a1a;transform:scaleX(0.9260);-webkit-text-stroke:0.25px;">16.02.2023 17:20:29</span>
<span class="t" id="t80" style="left:992.1px;top:154.58px;font-size:9.3px;line-height:13px;font-weight:400;color:#1a1a1a;transform:scaleX(0.9260);-webkit-text-stroke:0.25px;">15.04.2024 13:48:26</span>
<span class="t" id="t81" style="left:1100.8px;top:154.58px;font-size:9.3px;line-height:13px;font-weight:400;color:#1a1a1a;transform:scaleX(0.8568);-webkit-text-stroke:0.25px;">Yes</span>
<span class="t" id="t82" style="left:1217.9px;top:154.58px;font-size:9.3px;line-height:13px;font-weight:400;color:#1a1a1a;transform:scaleX(0.9300);-webkit-text-stroke:0.25px;">01.01.2010 11:07:55</span>
<svg style="left:403.6px;top:169.0px;" width="14" height="14" viewBox="0 0 14 14"><rect x="1" y="1" width="9.6" height="10.6" rx="1" fill="#fff" stroke="#777" stroke-width="1"/><path d="M2.8 3.8H4M2.8 6.3H4M2.8 8.8H4" stroke="#4472c4" stroke-width="1.2"/><path d="M5.2 3.8H8.8M5.2 6.3H8.8" stroke="#888" stroke-width="1"/><path d="M6 10L8 12L12 8" fill="none" stroke="#2aa02a" stroke-width="1.5"/></svg>
<span class="t" id="t83" style="left:419.6px;top:169.78px;font-size:9.3px;line-height:13px;font-weight:400;color:#1a1a1a;transform:scaleX(0.9832);-webkit-text-stroke:0.25px;">KAL-002/1</span>
<span class="t" id="t84" style="left:509px;top:169.78px;font-size:9.3px;line-height:13px;font-weight:400;color:#1a1a1a;transform:scaleX(0.9756);-webkit-text-stroke:0.25px;">No</span>
<span class="t" id="t85" style="left:560px;top:169.78px;font-size:9.3px;line-height:13px;font-weight:400;color:#1a1a1a;transform:scaleX(1.0202);-webkit-text-stroke:0.25px;">Caliper digital 0-150 mm</span>
<span class="t" id="t86" style="left:741px;top:169.78px;font-size:9.3px;line-height:13px;font-weight:400;color:#1a1a1a;transform:scaleX(1.0303);-webkit-text-stroke:0.25px;">Calibration</span>
<span class="t" id="t87" style="left:829.2px;top:169.78px;font-size:9.3px;line-height:13px;font-weight:400;color:#1a1a1a;transform:scaleX(1.0317);-webkit-text-stroke:0.25px;">12 Months</span>
<span class="t" id="t88" style="left:896.9px;top:169.78px;font-size:9.3px;line-height:13px;font-weight:400;color:#1a1a1a;transform:scaleX(0.9260);-webkit-text-stroke:0.25px;">25.03.2024 16:07:33</span>
<span class="t" id="t89" style="left:992.1px;top:169.78px;font-size:9.3px;line-height:13px;font-weight:400;color:#1a1a1a;transform:scaleX(0.9260);-webkit-text-stroke:0.25px;">25.03.2025 16:07:33</span>
<span class="t" id="t90" style="left:1100.8px;top:169.78px;font-size:9.3px;line-height:13px;font-weight:400;color:#1a1a1a;transform:scaleX(0.8568);-webkit-text-stroke:0.25px;">Yes</span>
<span class="t" id="t91" style="left:1217.9px;top:169.78px;font-size:9.3px;line-height:13px;font-weight:400;color:#1a1a1a;transform:scaleX(0.9225);-webkit-text-stroke:0.25px;">07.02.2012 12:50:16</span>
<div style="left:399px;top:765px;width:905px;height:10.5px;background:#ededed;"></div>
<div style="left:399px;top:775.5px;width:905px;height:18px;background:#f8f8f8;"></div>
<div style="left:399px;top:776.5px;width:292px;height:16.5px;background:#f3f3f3;"></div>
<div style="left:399px;top:776.5px;width:91.5px;height:16.5px;background:#fdfdfd;"></div>
<div style="left:490.5px;top:777px;width:1px;height:16px;background:#d8d8d8;"></div>
<div style="left:555.5px;top:777px;width:1px;height:16px;background:#d8d8d8;"></div>
<div style="left:621px;top:777px;width:1px;height:16px;background:#d8d8d8;"></div>
<div style="left:691px;top:777px;width:1px;height:16px;background:#d8d8d8;"></div>
<span class="t" id="t92" style="left:407.6px;top:778.98px;font-size:9.3px;line-height:13px;font-weight:400;color:#1a1a1a;transform:scaleX(1.0178);-webkit-text-stroke:0.25px;">Inspection Orders</span>
<span class="t" id="t93" style="left:499px;top:778.98px;font-size:9.3px;line-height:13px;font-weight:400;color:#1a1a1a;transform:scaleX(1.0206);-webkit-text-stroke:0.25px;">Inspections</span>
<span class="t" id="t94" style="left:562.4px;top:778.98px;font-size:9.3px;line-height:13px;font-weight:400;color:#1a1a1a;transform:scaleX(1.0403);-webkit-text-stroke:0.25px;">Movements</span>
<span class="t" id="t95" style="left:629px;top:778.98px;font-size:9.3px;line-height:13px;font-weight:400;color:#1a1a1a;transform:scaleX(1.0433);-webkit-text-stroke:0.25px;">Components</span>
<div style="left:0px;top:793px;width:1304px;height:1px;background:#161616;"></div>
<div style="left:1303px;top:41px;width:1px;height:753px;background:#1c1c1c;"></div>
<div style="left:351px;top:184px;width:889px;height:590.2px;background:#f8f8f8;box-shadow:0 2px 9px rgba(0,0,0,0.28),0 0 1px rgba(0,0,0,0.35);"></div>
<div style="left:351px;top:184px;width:889px;height:21.5px;background:#111;"></div>
<svg style="left:356px;top:188.5px;" width="14" height="14" viewBox="0 0 20 18"><path d="M7.9 0.7C4 1.5 1.4 4 0.7 7.9C2.6 5.3 4.6 3.6 7.3 2.8Z" fill="#3f6fd0"/><path d="M7.2 7.6L2.9 10.5L3.6 11.1L8 9.4Z" fill="#3f6fd0"/><path d="M6.6 4.7L7.4 2.7L10 4.1L12.8 8.5L10.3 11L8 8.8Z" fill="#3f6fd0"/><path d="M10 3.4L10.9 2.6" stroke="#9ab" stroke-width="1"/><path d="M12.1 12.3L14.5 10.5L19.4 15.5L17.3 17.6Z" fill="#3f6fd0"/></svg>
<span class="t" id="t96" style="left:377.7px;top:189.85px;font-size:10px;line-height:14px;font-weight:400;color:#f4f4f4;transform:scaleX(1.0314);-webkit-text-stroke:0.25px;">Edit Gauge 'MS-01'</span>
<svg style="left:1143px;top:195.8px;" width="11" height="3" viewBox="0 0 11 3"><path d="M1 1.5H9" stroke="#fff" stroke-width="1.1"/></svg>
<svg style="left:1179.5px;top:189.5px;" width="10" height="10" viewBox="0 0 10 10"><rect x="1.3" y="1.3" width="7" height="7" fill="none" stroke="#fff" stroke-width="1.1"/></svg>
<svg style="left:1216px;top:189px;" width="12" height="11" viewBox="0 0 12 11"><path d="M1.6 1.4L9.8 9.6M9.8 1.4L1.6 9.6" stroke="#fff" stroke-width="1.1"/></svg>
<div style="left:351px;top:205.5px;width:889px;height:45.5px;background:#fff;"></div>
<div style="left:351px;top:251px;width:889px;height:1px;background:#c4c4c4;"></div>
<span class="t" id="t97" style="left:360px;top:209.34px;font-size:8px;line-height:12px;font-weight:400;color:#333;transform:scaleX(1.0313);-webkit-text-stroke:0.25px;">Gauge Group</span>
<span class="t" id="t98" style="left:412.9px;top:209.34px;font-size:8px;line-height:12px;font-weight:400;color:#1a2ee0;transform:scaleX(1.0381);text-decoration:underline;-webkit-text-stroke:0.25px;">Caliper 0-150 mm</span>
<div style="left:774.5px;top:227px;width:50.2px;height:18.8px;background:#3a9bff;border-radius:3px;"></div>
<span class="t" id="t99" style="left:360px;top:230.98px;font-size:9.3px;line-height:13px;font-weight:700;color:#111;transform:scaleX(1.0108);-webkit-text-stroke:0.25px;">General</span>
<span class="t" id="t100" style="left:407.6px;top:230.98px;font-size:9.3px;line-height:13px;font-weight:700;color:#111;transform:scaleX(1.0183);-webkit-text-stroke:0.25px;">Delivery Data</span>
<span class="t" id="t101" style="left:479.8px;top:230.98px;font-size:9.3px;line-height:13px;font-weight:700;color:#111;transform:scaleX(0.9761);-webkit-text-stroke:0.25px;">Calibration</span>
<span class="t" id="t102" style="left:539.4px;top:230.98px;font-size:9.3px;line-height:13px;font-weight:700;color:#111;transform:scaleX(0.9657);-webkit-text-stroke:0.25px;">Inspections</span>
<span class="t" id="t103" style="left:601.7px;top:230.98px;font-size:9.3px;line-height:13px;font-weight:700;color:#111;transform:scaleX(1.0478);-webkit-text-stroke:0.25px;">Movements</span>
<span class="t" id="t104" style="left:667.2px;top:230.98px;font-size:9.3px;line-height:13px;font-weight:700;color:#111;transform:scaleX(0.8965);-webkit-text-stroke:0.25px;">CAPA</span>
<span class="t" id="t105" style="left:712.8px;top:230.98px;font-size:9.3px;line-height:13px;font-weight:700;color:#111;transform:scaleX(1.0262);-webkit-text-stroke:0.25px;">Comment</span>
<span class="t" id="t106" style="left:778.7px;top:230.98px;font-size:9.3px;line-height:13px;font-weight:700;color:#fff;transform:scaleX(1.0367);-webkit-text-stroke:0.25px;">Object</span>
<span class="t" id="t107" style="left:831.6px;top:230.98px;font-size:9.3px;line-height:13px;font-weight:700;color:#111;transform:scaleX(0.9956);-webkit-text-stroke:0.25px;">Documents</span>
<div style="left:694.5px;top:234.8px;width:4.8px;height:4.8px;background:#3aa820;border-radius:1.5px;"></div>
<div style="left:760.8000000000001px;top:234.8px;width:4.8px;height:4.8px;background:#3aa820;border-radius:1.5px;"></div>
<div style="left:813.3000000000001px;top:234.8px;width:4.8px;height:4.8px;background:#3aa820;border-radius:1.5px;"></div>
<div style="left:886.4px;top:234.8px;width:4.8px;height:4.8px;background:#d8d8d8;border-radius:1.5px;"></div>
<svg style="left:1226.5px;top:228.5px;" width="5" height="15" viewBox="0 0 5 15"><circle cx="2.5" cy="2.2" r="1.25" fill="#222"/><circle cx="2.5" cy="7.4" r="1.25" fill="#222"/><circle cx="2.5" cy="12.6" r="1.25" fill="#222"/></svg>
<span class="t" id="t108" style="left:363.4px;top:261.15px;font-size:10px;line-height:14px;font-weight:700;color:#111;transform:scaleX(1.0217);-webkit-text-stroke:0.25px;">Object</span>
<div style="left:363.4px;top:278px;width:864px;height:1.5px;background:#b4b4b4;"></div>
<svg style="left:367px;top:288px;" width="19" height="16" viewBox="0 0 19 16"><rect x="0.8" y="0.8" width="17.4" height="14.4" fill="#fff" stroke="#666" stroke-width="1.3"/><path d="M1.6 14.4V11L6.4 5.6L10.2 10L12.6 7.6L17.4 12.6V14.4Z" fill="#3aa6b4"/><circle cx="13.6" cy="4.6" r="1.7" fill="#f0a030"/></svg>
<div style="left:394px;top:286.5px;width:833.5px;height:443px;background:#fff;border:1px solid #d0d0d0;box-sizing:border-box;"></div>
<div style="left:394px;top:708.5px;width:833.5px;height:1px;background:#d4d4d4;"></div>
<div style="left:395px;top:709.5px;width:831.5px;height:19px;background:#fafafa;"></div>
<div style="left:1159px;top:520.5px;width:67.5px;height:5px;background:#f5f5f5;"></div>
<div style="left:395px;top:521.5px;width:36px;height:4px;background:#f5f5f5;"></div>
<svg style="left:394px;top:286px;" width="834" height="423" viewBox="394 286 834 423"><defs>
<radialGradient id="bg" cx="0.72" cy="0.12" r="0.8"><stop offset="0" stop-color="#f1f7f9"/><stop offset="0.5" stop-color="#f8fbfc"/><stop offset="1" stop-color="#ffffff"/></radialGradient>
<linearGradient id="brush1" x1="0" y1="0" x2="0.3" y2="1"><stop offset="0" stop-color="#a2a2a0"/><stop offset="0.45" stop-color="#b4b4b2"/><stop offset="1" stop-color="#c4c4c2"/></linearGradient>
<linearGradient id="brush2" x1="1" y1="0" x2="0" y2="1"><stop offset="0" stop-color="#b2b2ae"/><stop offset="0.5" stop-color="#c6c6c2"/><stop offset="1" stop-color="#d4d4d0"/></linearGradient>
<linearGradient id="refl1" x1="0.8" y1="0" x2="0.1" y2="1"><stop offset="0" stop-color="#4f574f"/><stop offset="0.25" stop-color="#6a746c"/><stop offset="0.55" stop-color="#8f9a94"/><stop offset="1" stop-color="#b8c2bf"/></linearGradient>
<linearGradient id="refl2" x1="1" y1="0" x2="0" y2="1"><stop offset="0" stop-color="#424a44"/><stop offset="0.3" stop-color="#7a857f"/><stop offset="0.65" stop-color="#a3ada9"/><stop offset="1" stop-color="#bcc5c2"/></linearGradient>
<linearGradient id="beam" x1="0" y1="0" x2="1" y2="0.45"><stop offset="0" stop-color="#d6d5d0"/><stop offset="1" stop-color="#dedcd6"/></linearGradient>
<linearGradient id="beamR" x1="0" y1="0" x2="1" y2="0.5"><stop offset="0" stop-color="#c4c4c0"/><stop offset="1" stop-color="#d8d8d4"/></linearGradient>
<linearGradient id="tip" x1="1" y1="0" x2="0" y2="1"><stop offset="0" stop-color="#3e3838"/><stop offset="0.6" stop-color="#7c7474"/><stop offset="1" stop-color="#d8d2d2"/></linearGradient>
<linearGradient id="lcd" x1="0" y1="0" x2="1" y2="1"><stop offset="0" stop-color="#cdd2d5"/><stop offset="0.5" stop-color="#d3d7d9"/><stop offset="1" stop-color="#c6cbce"/></linearGradient>
<linearGradient id="hous" x1="0" y1="0" x2="0.4" y2="1"><stop offset="0" stop-color="#2a2a2b"/><stop offset="0.5" stop-color="#1f1f20"/><stop offset="1" stop-color="#262627"/></linearGradient>
<linearGradient id="wheel" x1="0" y1="0" x2="1" y2="0.25"><stop offset="0" stop-color="#b2b2b0"/><stop offset="0.45" stop-color="#cdcdcb"/><stop offset="0.7" stop-color="#b9b9b7"/><stop offset="1" stop-color="#a9a9a7"/></linearGradient>
<linearGradient id="knob" x1="0" y1="0" x2="1" y2="0.3"><stop offset="0" stop-color="#b8b4ac"/><stop offset="0.5" stop-color="#a09c94"/><stop offset="1" stop-color="#8c8880"/></linearGradient>
<linearGradient id="reflA" gradientUnits="userSpaceOnUse" x1="690" y1="560" x2="705.6" y2="580.8"><stop offset="0" stop-color="#596056"/><stop offset="0.35" stop-color="#838a80"/><stop offset="0.8" stop-color="#a9afa7"/><stop offset="1" stop-color="#c9cbbf"/></linearGradient>
<linearGradient id="reflB" gradientUnits="userSpaceOnUse" x1="580" y1="503" x2="598" y2="517.5"><stop offset="0" stop-color="#555d54"/><stop offset="0.4" stop-color="#7d867d"/><stop offset="1" stop-color="#a9b2ac"/></linearGradient>
<linearGradient id="fadeL" gradientUnits="userSpaceOnUse" x1="640" y1="440" x2="535" y2="600"><stop offset="0" stop-color="#fff" stop-opacity="0"/><stop offset="0.45" stop-color="#fff" stop-opacity="0.08"/><stop offset="1" stop-color="#fff" stop-opacity="0.5"/></linearGradient>
<linearGradient id="fadeM" gradientUnits="userSpaceOnUse" x1="760" y1="530" x2="610" y2="640"><stop offset="0" stop-color="#000" stop-opacity="0.25"/><stop offset="0.3" stop-color="#fff" stop-opacity="0"/><stop offset="1" stop-color="#fff" stop-opacity="0.35"/></linearGradient>
<clipPath id="pc"><rect x="448" y="297" width="710.5" height="406"/></clipPath>
<filter id="b1" x="-20%" y="-20%" width="140%" height="140%"><feGaussianBlur stdDeviation="1.2"/></filter>
<filter id="b2" x="-20%" y="-20%" width="140%" height="140%"><feGaussianBlur stdDeviation="0.6"/></filter>
</defs>
<g clip-path="url(#pc)">
<rect x="448" y="297" width="711" height="406" fill="url(#bg)"/>
<g filter="url(#b2)"><polygon points="706.5,378.6 781.3,321.9 770.2,338.5 748,367.6 728.6,387" fill="#d3d7d6" />
<polygon points="728.6,389.7 755,356.5 788.9,345.4 778.5,356.5 761.9,370.3 750.8,387 739.7,395.3" fill="#c0c6c2" />
<path d="M741.5,374 L751,357.5" stroke="#ecece6" stroke-width="3" stroke-linecap="round"/>
<polygon points="687.1,373.1 723.1,317.7 726.6,327.4 723.1,348.2 717.6,362 699.6,377.3" fill="#bdc7c2" />
<polygon points="622,349.8 636.4,333.5 667.5,342.2 678.1,330.2 685.7,330.2 698.2,334.3 692.6,353.7 680.9,370.3 700,381" fill="#b0b0ac" />
<polygon points="715.9,296.2 715.5,303.9 706.5,326 695.4,359.3 686.4,373.1 680.9,370.3 692.6,353.7 698.2,332.9 700.9,331.6" fill="#b9b9b6" />
<polygon points="685.7,328.1 711.3,296.2 715.9,296.2 715.5,303.2 700.9,331.6 695.4,333.2" fill="#8e7e76" />
<polygon points="680.9,370.3 693.3,353.7 698.2,359.3 686.4,373.1" fill="#3c3c3a" />
<polygon points="622,349.8 745,404.6 711,450.3 586.1,394.1" fill="url(#beam)" />
<polygon points="641.1,420.4 653,425.2 705.7,447.9 701,456 655.5,436.5 650,429" fill="#e4e2dc" />
<polygon points="640.2,426.2 655.2,432.9 700,454.1 700,463 649.9,450.5 623.5,484 624.4,497 535.9,602.7 528.7,574 549,540.5 608.9,466 612.9,463" fill="url(#reflB)" />
<polygon points="640.2,426.2 655.2,432.9 700,454.1 700,463 649.9,450.5 623.5,484 624.4,497 535.9,602.7 528.7,574 549,540.5 608.9,466 612.9,463" fill="url(#fadeL)" />
<polygon points="634,428 640.2,426.2 655.2,432.9 700,454.1 700,463 649.9,450.5 632,473.5 612.9,463" fill="#545c53" />
<polygon points="649.9,450.5 653.5,454 627,489.4 623.5,484" fill="#d9d9cd" />
<polygon points="649.9,450.5 696,465 695,469.5 653.5,454.5" fill="#d4d4ca" />
<polygon points="625.5,497 630,499.5 566,578 559,577" fill="#bcc5c3" />
<polygon points="586,394 641,420.4 635,426.4 605.3,459 608.9,466 549,540.5 520,581 511,545 551,440 572,410" fill="url(#brush1)" />
<polygon points="510.8,545.3 531.1,530.9 549,540.5 520.3,581.1" fill="#d6d1c9" />
<polygon points="634,425.9 640.6,426.2 613.2,463.4 609.5,467 606.5,458.5" fill="#d6d2b8" />
<polygon points="630.4,607.5 753.6,520.1 770,546 644.5,634.6 606.6,644 603,638" fill="url(#reflA)" />
<polygon points="630.4,607.5 753.6,520.1 770,546 644.5,634.6 606.6,644 603,638" fill="url(#fadeM)" />
<polygon points="644.5,633.6 769.5,545 772,550.5 647,640 606,645.5" fill="#d9d8cc" />
<polygon points="677,498.6 691.4,484.3 753,515 631.5,606.5 590.9,618.2 618.4,574" fill="url(#brush2)" />
<polygon points="619.6,575.2 631.6,581.1 617.2,605 590.9,618.2" fill="url(#tip)" />
<polygon points="590.9,618.2 617.2,603.5 629.5,602 751,511 754,516 632,608.5" fill="#ebe7de" />
<clipPath id="cj1"><polygon points="586,394 641,420.4 635,426.4 605.3,459 608.9,466 549,540.5 531.1,530.9 510.8,545.3 551,440 572,410" fill="#000" /></clipPath><g clip-path="url(#cj1)"><path d="M559.6,330.9l237.6,105.8" stroke="#fff" stroke-width="0.7" opacity="0.17"/><path d="M557.8,335.0l237.6,105.8" stroke="#fff" stroke-width="1.3" opacity="0.09"/><path d="M556.8,337.1l237.6,105.8" stroke="#fff" stroke-width="0.7" opacity="0.09"/><path d="M554.8,341.7l237.6,105.8" stroke="#5a5a5a" stroke-width="0.9" opacity="0.10"/><path d="M553.0,345.8l237.6,105.8" stroke="#5a5a5a" stroke-width="1.2" opacity="0.16"/><path d="M551.0,350.3l237.6,105.8" stroke="#fff" stroke-width="1.0" opacity="0.20"/><path d="M550.5,351.4l237.6,105.8" stroke="#fff" stroke-width="1.7" opacity="0.12"/><path d="M548.9,355.0l237.6,105.8" stroke="#5a5a5a" stroke-width="1.1" opacity="0.17"/><path d="M546.8,359.6l237.6,105.8" stroke="#fff" stroke-width="0.9" opacity="0.09"/><path d="M545.1,363.4l237.6,105.8" stroke="#fff" stroke-width="1.4" opacity="0.12"/><path d="M543.8,366.3l237.6,105.8" stroke="#fff" stroke-width="1.6" opacity="0.19"/><path d="M542.5,369.2l237.6,105.8" stroke="#5a5a5a" stroke-width="1.8" opacity="0.15"/><path d="M540.4,374.1l237.6,105.8" stroke="#fff" stroke-width="0.8" opacity="0.22"/><path d="M539.2,376.7l237.6,105.8" stroke="#5a5a5a" stroke-width="1.3" opacity="0.10"/><path d="M538.1,379.2l237.6,105.8" stroke="#5a5a5a" stroke-width="1.4" opacity="0.19"/><path d="M535.5,385.0l237.6,105.8" stroke="#fff" stroke-width="1.4" opacity="0.18"/><path d="M534.3,387.7l237.6,105.8" stroke="#fff" stroke-width="1.9" opacity="0.20"/><path d="M532.9,390.9l237.6,105.8" stroke="#5a5a5a" stroke-width="1.6" opacity="0.09"/><path d="M531.1,394.9l237.6,105.8" stroke="#5a5a5a" stroke-width="1.0" opacity="0.20"/><path d="M529.9,397.7l237.6,105.8" stroke="#5a5a5a" stroke-width="1.2" opacity="0.08"/><path d="M528.6,400.5l237.6,105.8" stroke="#fff" stroke-width="1.7" opacity="0.09"/><path d="M527.1,403.9l237.6,105.8" stroke="#fff" stroke-width="1.8" opacity="0.13"/><path d="M525.6,407.3l237.6,105.8" stroke="#fff" stroke-width="1.8" opacity="0.16"/><path d="M523.1,412.9l237.6,105.8" stroke="#5a5a5a" stroke-width="1.2" opacity="0.12"/><path d="M522.1,415.1l237.6,105.8" stroke="#5a5a5a" stroke-width="0.8" opacity="0.21"/><path d="M520.8,418.1l237.6,105.8" stroke="#fff" stroke-width="1.3" opacity="0.11"/><path d="M518.7,422.7l237.6,105.8" stroke="#fff" stroke-width="1.2" opacity="0.08"/><path d="M517.4,425.6l237.6,105.8" stroke="#5a5a5a" stroke-width="1.6" opacity="0.21"/><path d="M515.7,429.5l237.6,105.8" stroke="#5a5a5a" stroke-width="0.7" opacity="0.17"/><path d="M513.6,434.1l237.6,105.8" stroke="#5a5a5a" stroke-width="1.7" opacity="0.20"/><path d="M512.7,436.2l237.6,105.8" stroke="#fff" stroke-width="1.5" opacity="0.09"/><path d="M511.6,438.8l237.6,105.8" stroke="#fff" stroke-width="0.8" opacity="0.11"/><path d="M509.7,443.1l237.6,105.8" stroke="#fff" stroke-width="0.8" opacity="0.08"/><path d="M508.4,445.9l237.6,105.8" stroke="#fff" stroke-width="1.8" opacity="0.08"/><path d="M506.2,450.8l237.6,105.8" stroke="#fff" stroke-width="1.1" opacity="0.12"/><path d="M504.9,453.6l237.6,105.8" stroke="#fff" stroke-width="2.0" opacity="0.20"/><path d="M503.3,457.4l237.6,105.8" stroke="#fff" stroke-width="0.7" opacity="0.09"/><path d="M501.8,460.6l237.6,105.8" stroke="#fff" stroke-width="0.8" opacity="0.20"/><path d="M500.7,463.2l237.6,105.8" stroke="#5a5a5a" stroke-width="0.8" opacity="0.15"/><path d="M498.5,468.2l237.6,105.8" stroke="#fff" stroke-width="2.0" opacity="0.15"/><path d="M496.5,472.6l237.6,105.8" stroke="#5a5a5a" stroke-width="1.1" opacity="0.12"/><path d="M495.8,474.1l237.6,105.8" stroke="#5a5a5a" stroke-width="1.7" opacity="0.15"/><path d="M494.1,478.1l237.6,105.8" stroke="#fff" stroke-width="2.0" opacity="0.19"/><path d="M491.8,483.0l237.6,105.8" stroke="#5a5a5a" stroke-width="1.6" opacity="0.19"/><path d="M491.1,484.8l237.6,105.8" stroke="#fff" stroke-width="0.6" opacity="0.13"/><path d="M489.8,487.7l237.6,105.8" stroke="#fff" stroke-width="1.6" opacity="0.12"/><path d="M487.0,493.8l237.6,105.8" stroke="#fff" stroke-width="2.0" opacity="0.21"/><path d="M485.5,497.3l237.6,105.8" stroke="#fff" stroke-width="0.9" opacity="0.11"/><path d="M484.9,498.7l237.6,105.8" stroke="#fff" stroke-width="1.9" opacity="0.17"/><path d="M482.5,504.0l237.6,105.8" stroke="#fff" stroke-width="1.7" opacity="0.17"/><path d="M481.9,505.4l237.6,105.8" stroke="#5a5a5a" stroke-width="1.7" opacity="0.21"/><path d="M479.5,510.8l237.6,105.8" stroke="#fff" stroke-width="1.7" opacity="0.10"/><path d="M478.5,513.1l237.6,105.8" stroke="#5a5a5a" stroke-width="1.2" opacity="0.22"/><path d="M476.8,516.8l237.6,105.8" stroke="#5a5a5a" stroke-width="0.8" opacity="0.18"/><path d="M475.6,519.6l237.6,105.8" stroke="#fff" stroke-width="1.7" opacity="0.21"/><path d="M474.0,523.1l237.6,105.8" stroke="#5a5a5a" stroke-width="1.5" opacity="0.22"/><path d="M472.2,527.2l237.6,105.8" stroke="#fff" stroke-width="0.6" opacity="0.10"/><path d="M469.9,532.4l237.6,105.8" stroke="#5a5a5a" stroke-width="1.9" opacity="0.15"/><path d="M469.0,534.4l237.6,105.8" stroke="#5a5a5a" stroke-width="0.9" opacity="0.20"/><path d="M467.6,537.4l237.6,105.8" stroke="#fff" stroke-width="1.4" opacity="0.11"/></g>
<clipPath id="cj2"><polygon points="677,498.6 691.4,484.3 753,515 631.5,606.5 617.2,605 631.6,581.1 618.4,574" fill="#000" /></clipPath><g clip-path="url(#cj2)"><path d="M639.7,420.7l237.6,105.8" stroke="#fff" stroke-width="1.9" opacity="0.10"/><path d="M638.0,424.5l237.6,105.8" stroke="#fff" stroke-width="1.9" opacity="0.16"/><path d="M636.4,428.1l237.6,105.8" stroke="#5a5a5a" stroke-width="1.3" opacity="0.15"/><path d="M634.7,431.9l237.6,105.8" stroke="#fff" stroke-width="0.9" opacity="0.14"/><path d="M633.8,433.9l237.6,105.8" stroke="#5a5a5a" stroke-width="1.3" opacity="0.10"/><path d="M631.4,439.4l237.6,105.8" stroke="#5a5a5a" stroke-width="1.3" opacity="0.13"/><path d="M630.0,442.4l237.6,105.8" stroke="#5a5a5a" stroke-width="1.4" opacity="0.09"/><path d="M628.9,445.0l237.6,105.8" stroke="#fff" stroke-width="1.3" opacity="0.19"/><path d="M626.9,449.3l237.6,105.8" stroke="#5a5a5a" stroke-width="1.2" opacity="0.21"/><path d="M625.3,453.0l237.6,105.8" stroke="#fff" stroke-width="1.6" opacity="0.15"/><path d="M624.0,456.0l237.6,105.8" stroke="#fff" stroke-width="1.9" opacity="0.15"/><path d="M622.1,460.1l237.6,105.8" stroke="#5a5a5a" stroke-width="1.0" opacity="0.21"/><path d="M620.7,463.2l237.6,105.8" stroke="#5a5a5a" stroke-width="0.8" opacity="0.20"/><path d="M619.7,465.5l237.6,105.8" stroke="#fff" stroke-width="0.9" opacity="0.09"/><path d="M618.3,468.8l237.6,105.8" stroke="#5a5a5a" stroke-width="1.9" opacity="0.19"/><path d="M616.6,472.5l237.6,105.8" stroke="#5a5a5a" stroke-width="0.8" opacity="0.17"/><path d="M614.2,478.0l237.6,105.8" stroke="#5a5a5a" stroke-width="1.9" opacity="0.11"/><path d="M613.2,480.2l237.6,105.8" stroke="#fff" stroke-width="1.8" opacity="0.22"/><path d="M612.0,483.0l237.6,105.8" stroke="#fff" stroke-width="1.1" opacity="0.15"/><path d="M610.4,486.5l237.6,105.8" stroke="#fff" stroke-width="0.6" opacity="0.18"/><path d="M608.4,491.0l237.6,105.8" stroke="#fff" stroke-width="1.1" opacity="0.08"/><path d="M606.7,494.7l237.6,105.8" stroke="#fff" stroke-width="2.0" opacity="0.09"/><path d="M605.0,498.6l237.6,105.8" stroke="#5a5a5a" stroke-width="1.0" opacity="0.09"/><path d="M604.4,500.0l237.6,105.8" stroke="#5a5a5a" stroke-width="0.8" opacity="0.12"/><path d="M602.4,504.5l237.6,105.8" stroke="#5a5a5a" stroke-width="1.0" opacity="0.19"/><path d="M601.2,507.2l237.6,105.8" stroke="#5a5a5a" stroke-width="1.6" opacity="0.16"/><path d="M599.7,510.6l237.6,105.8" stroke="#fff" stroke-width="1.2" opacity="0.18"/><path d="M598.2,514.0l237.6,105.8" stroke="#5a5a5a" stroke-width="1.7" opacity="0.17"/><path d="M596.6,517.5l237.6,105.8" stroke="#5a5a5a" stroke-width="1.8" opacity="0.09"/><path d="M594.6,522.0l237.6,105.8" stroke="#fff" stroke-width="1.9" opacity="0.16"/><path d="M593.3,524.9l237.6,105.8" stroke="#fff" stroke-width="0.9" opacity="0.15"/><path d="M591.9,528.0l237.6,105.8" stroke="#fff" stroke-width="0.9" opacity="0.09"/><path d="M590.1,532.0l237.6,105.8" stroke="#fff" stroke-width="1.0" opacity="0.19"/><path d="M588.3,536.0l237.6,105.8" stroke="#fff" stroke-width="0.6" opacity="0.13"/><path d="M587.1,538.8l237.6,105.8" stroke="#fff" stroke-width="1.4" opacity="0.18"/><path d="M585.6,542.1l237.6,105.8" stroke="#fff" stroke-width="0.7" opacity="0.21"/><path d="M583.3,547.3l237.6,105.8" stroke="#fff" stroke-width="1.8" opacity="0.15"/><path d="M582.3,549.6l237.6,105.8" stroke="#fff" stroke-width="2.0" opacity="0.18"/><path d="M580.8,552.9l237.6,105.8" stroke="#5a5a5a" stroke-width="1.5" opacity="0.18"/><path d="M579.2,556.6l237.6,105.8" stroke="#fff" stroke-width="0.8" opacity="0.09"/><path d="M578.0,559.1l237.6,105.8" stroke="#5a5a5a" stroke-width="0.8" opacity="0.12"/><path d="M576.5,562.6l237.6,105.8" stroke="#5a5a5a" stroke-width="1.5" opacity="0.20"/><path d="M574.7,566.7l237.6,105.8" stroke="#fff" stroke-width="1.2" opacity="0.12"/><path d="M573.3,569.8l237.6,105.8" stroke="#fff" stroke-width="1.9" opacity="0.12"/><path d="M570.7,575.5l237.6,105.8" stroke="#fff" stroke-width="2.0" opacity="0.11"/><path d="M570.0,577.2l237.6,105.8" stroke="#fff" stroke-width="1.1" opacity="0.08"/><path d="M568.3,581.1l237.6,105.8" stroke="#fff" stroke-width="1.3" opacity="0.11"/><path d="M567.3,583.3l237.6,105.8" stroke="#fff" stroke-width="1.2" opacity="0.09"/><path d="M565.7,586.8l237.6,105.8" stroke="#fff" stroke-width="0.9" opacity="0.12"/><path d="M563.5,591.8l237.6,105.8" stroke="#fff" stroke-width="1.5" opacity="0.19"/></g>
<clipPath id="cj3"><polygon points="622,349.8 636.4,333.5 667.5,342.2 678.1,330.2 685.7,330.2 698.2,334.3 692.6,353.7 680.9,370.3 700,381" fill="#000" /></clipPath><g clip-path="url(#cj3)"><path d="M639.3,323.5l109.7,48.8" stroke="#5a5a5a" stroke-width="1.1" opacity="0.13"/><path d="M637.9,326.6l109.7,48.8" stroke="#fff" stroke-width="1.5" opacity="0.18"/><path d="M637.7,327.3l109.7,48.8" stroke="#5a5a5a" stroke-width="1.5" opacity="0.20"/><path d="M635.9,331.3l109.7,48.8" stroke="#5a5a5a" stroke-width="1.3" opacity="0.10"/><path d="M634.9,333.4l109.7,48.8" stroke="#5a5a5a" stroke-width="1.8" opacity="0.19"/><path d="M633.7,336.2l109.7,48.8" stroke="#5a5a5a" stroke-width="1.6" opacity="0.18"/><path d="M632.9,338.0l109.7,48.8" stroke="#fff" stroke-width="1.1" opacity="0.10"/><path d="M631.8,340.3l109.7,48.8" stroke="#5a5a5a" stroke-width="1.5" opacity="0.16"/><path d="M630.2,344.0l109.7,48.8" stroke="#5a5a5a" stroke-width="0.6" opacity="0.15"/><path d="M628.9,347.0l109.7,48.8" stroke="#5a5a5a" stroke-width="1.3" opacity="0.15"/><path d="M627.9,349.3l109.7,48.8" stroke="#fff" stroke-width="1.0" opacity="0.18"/><path d="M627.2,350.6l109.7,48.8" stroke="#fff" stroke-width="0.9" opacity="0.18"/></g>
<polygon points="1000,520 1022,530.8 1160,594.5 1160,675 981.3,584.6" fill="url(#beamR)" />
<polygon points="1022,530.8 1160,594.5 1160,600.5 1017,537.5" fill="#bcbcba" />
<polygon points="1017,537.5 1160,600.5 1160,604.5 1015.5,541" fill="#dededc" />
<polygon points="988,590 1160,675 1160,685.5 1008,612" fill="#c3c3c0" />
<polygon points="1010,614 1160,685.5 1160,703 1019.6,636" fill="#5e5f5c" />
<polygon points="1019.6,636 1160,703 1146,703 1021,642" fill="#b5b6b3" />
<polygon points="754.2,513.5 847.5,548.2 849.9,566 761.3,531.4" fill="#8d8e88" />
<polygon points="760,533 852,569 857,600 761.3,552" fill="#2e2f2c" />
<polygon points="761.3,552 857,600 858,606 756,556" fill="#8f9490" />
<polygon points="847.6,548.8 939.9,585.2 958,591 951.0,600.9 942.3,605.9 872.3,617.5 866.5,605.3 854.8,576.2" fill="#272727" />
<polygon points="870.9,619.3 942.3,607.6 951.6,616.4 952.5,619.3 878.7,632.1 872.9,625.7" fill="#cdcdc5" />
<polygon points="872.9,627.2 878.7,632.7 952.5,619.9 955.1,643.2 882.2,650.2 875.8,637.4" fill="#262624" />
<g filter="url(#b1)"><polygon points="882.2,650.2 955.1,644.9 957.4,660.1 890.4,667.1 884.0,657.8" fill="#a9a9a2" /><polygon points="890.4,667.1 957.4,660.7 958.6,666.5 895.6,672.9" fill="#d8d8d4" /></g>
<path d="M759.5,374 Q763,366.5 772,367.5 L778.9,369 L860,404.6 L899,420.5 L946,441 L960.5,445.8 L1003.5,453 Q1017,457 1022,466 Q1028.5,478 1028.7,494.8 Q1028,512 1022.7,528.3 L1008,552 L1003,563 Q992,579 979,583.4 Q966,592 955,590.5 L940,585.3 L847.5,548.2 L754.2,513.5 L706.3,492 Q694,487 692,474 Q691.5,466 694.4,462 Z" fill="url(#hous)"/>
<path d="M766,372 L697.5,464 Q695,474 701,485" fill="none" stroke="#3a3a3a" stroke-width="3" opacity="0.8"/>
<clipPath id="hc"><path d="M759.5,374 Q763,366.5 772,367.5 L778.9,369 L860,404.6 L899,420.5 L946,441 L960.5,445.8 L1003.5,453 Q1017,457 1022,466 Q1028.5,478 1028.7,494.8 Q1028,512 1022.7,528.3 L1008,552 L1003,563 Q992,579 979,583.4 Q966,592 955,590.5 L940,585.3 L847.5,548.2 L754.2,513.5 L706.3,492 Q694,487 692,474 Q691.5,466 694.4,462 Z"/></clipPath>
<g clip-path="url(#hc)"><path d="M900,423 L950,443.5 L995,451 Q1016,457 1024,470 Q1030,482 1029,496 Q1028,514 1023,530 L1011,553 Q1003,568 990,578" fill="none" stroke="#121212" stroke-width="9"/><path d="M770,372 L860,410 L943.4,444.7 L991,452.6 Q1012,459 1019.5,472 Q1024.5,484 1024.1,495.7 Q1023,517 1017.5,538 L1004.2,559.2 Q996,570 985.7,575.5" fill="none" stroke="#505052" stroke-width="1.3" opacity="0.9"/></g>
<polygon points="936.8,479.9 996.3,502.3 1006.9,509 1004.2,530.1 993.7,548.6 967.2,561.8 954,559.2 901.1,538 897.2,530.1" fill="#2b2b2d" stroke="#2b2b2d" stroke-width="4" stroke-linejoin="round"/>
<polygon points="936.8,479.9 996.3,502.3 1006.9,509 1004.2,530.1 993.7,548.6 967.2,561.8 954,559.2 901.1,538 897.2,530.1" fill="none" stroke="#3e3e40" stroke-width="0.9" stroke-linejoin="round" transform="translate(0,-1.6)"/>
<path d="M909.1,531.4 Q932.8,520.9 946.1,494.4" fill="none" stroke="#060606" stroke-width="3" stroke-linecap="round"/>
<path d="M910.5,533.4 Q934.4,522.9 947.9,495.4" fill="none" stroke="#525254" stroke-width="0.9" stroke-linecap="round"/>
<path d="M921.0,537.4 Q944.9,526.3 957.6,499.7" fill="none" stroke="#060606" stroke-width="3" stroke-linecap="round"/>
<path d="M922.4,539.4 Q946.5,528.3 959.4,500.7" fill="none" stroke="#525254" stroke-width="0.9" stroke-linecap="round"/>
<path d="M932.9,543.3 Q957.0,531.7 969.2,505.0" fill="none" stroke="#060606" stroke-width="3" stroke-linecap="round"/>
<path d="M934.3,545.3 Q958.6,533.7 971.0,506.0" fill="none" stroke="#525254" stroke-width="0.9" stroke-linecap="round"/>
<path d="M944.8,549.2 Q969.1,537.1 980.8,510.3" fill="none" stroke="#060606" stroke-width="3" stroke-linecap="round"/>
<path d="M946.2,551.2 Q970.7,539.1 982.5,511.3" fill="none" stroke="#525254" stroke-width="0.9" stroke-linecap="round"/>
<path d="M956.7,555.2 Q981.2,542.5 992.3,515.6" fill="none" stroke="#060606" stroke-width="3" stroke-linecap="round"/>
<path d="M958.1,557.2 Q982.8,544.5 994.1,516.6" fill="none" stroke="#525254" stroke-width="0.9" stroke-linecap="round"/>
<path d="M853.1,558.7 Q904.1,562.8 945.8,593.1" fill="none" stroke="#0b0b0b" stroke-width="2"/>
<path d="M853.1,560.3000000000001 Q904.1,564.4 945.8,594.7" fill="none" stroke="#4c4c4c" stroke-width="0.9"/>
<path d="M856.3,569.2 Q904.4,572.4 943.7,595.7" fill="none" stroke="#0b0b0b" stroke-width="2"/>
<path d="M856.3,570.8000000000001 Q904.4,574.0 943.7,597.3000000000001" fill="none" stroke="#4c4c4c" stroke-width="0.9"/>
<path d="M859.5,579.7 Q904.7,581.9 941.7,598.3" fill="none" stroke="#0b0b0b" stroke-width="2"/>
<path d="M859.5,581.3000000000001 Q904.7,583.5 941.7,599.9" fill="none" stroke="#4c4c4c" stroke-width="0.9"/>
<path d="M862.7,590.2 Q905.0,591.4 939.6,600.9" fill="none" stroke="#0b0b0b" stroke-width="2"/>
<path d="M862.7,591.8000000000001 Q905.0,593.0 939.6,602.5" fill="none" stroke="#4c4c4c" stroke-width="0.9"/>
<path d="M865.9,600.6 Q905.3,601.0 937.6,603.6" fill="none" stroke="#0b0b0b" stroke-width="2"/>
<path d="M865.9,602.2 Q905.3,602.6 937.6,605.2" fill="none" stroke="#4c4c4c" stroke-width="0.9"/>
<path d="M779,387.5 Q781.5,385.8 785,387.3 L929,455.2 Q933,457.5 931,461 L890.5,515.5 Q888,518.8 883.5,517 L737.5,447.5 Q733.5,445.3 735.5,442.5 Z" fill="#ebebe9"/>
<polygon points="788,402 912.6,458.6 882,502.8 754,443.8" fill="url(#lcd)" />
<g transform="matrix(0.92,0.40,-0.62,0.86,0,0)"><text x="0" y="0"></text></g>
<ellipse cx="747.5" cy="471.5" rx="10.5" ry="7.5" fill="#0c0c0c" transform="rotate(28 747.5 471.5)"/>
<circle cx="749.6" cy="473.4" r="6.6" fill="#f6c516"/>
<rect x="772.2" y="482.0" width="28" height="13.6" rx="6.8" fill="#f6c516" transform="rotate(24 786.2 488.8)"/>
<rect x="815.2" y="502.9" width="28" height="13.6" rx="6.8" fill="#f6c516" transform="rotate(24 829.2 509.7)"/>
<polygon points="931.5,431 943.4,437.6 944.8,441.5 932.9,436.3" fill="#a9a69e" />
<polygon points="899.8,419.1 906.4,403.2 915.7,399.3 932.9,401.9 940.8,412.5 939.5,424.4 931.5,431 919.7,429.7" fill="url(#knob)" />
<path d="M907.7,402.6 L902.5,420.5" stroke="#6a665e" stroke-width="1" opacity="0.75"/>
<path d="M908.9,402.9 L903.7,420.8" stroke="#d6d2ca" stroke-width="0.7" opacity="0.7"/>
<path d="M911.2,403.2 L906.0,421.8" stroke="#6a665e" stroke-width="1" opacity="0.75"/>
<path d="M912.4,403.4 L907.2,422.1" stroke="#d6d2ca" stroke-width="0.7" opacity="0.7"/>
<path d="M914.6,403.7 L909.4,423.0" stroke="#6a665e" stroke-width="1" opacity="0.75"/>
<path d="M915.8,404.0 L910.6,423.3" stroke="#d6d2ca" stroke-width="0.7" opacity="0.7"/>
<path d="M918.1,404.2 L912.9,424.2" stroke="#6a665e" stroke-width="1" opacity="0.75"/>
<path d="M919.2,404.5 L914.1,424.6" stroke="#d6d2ca" stroke-width="0.7" opacity="0.7"/>
<path d="M921.5,404.8 L916.3,425.5" stroke="#6a665e" stroke-width="1" opacity="0.75"/>
<path d="M922.7,405.1 L917.5,425.8" stroke="#d6d2ca" stroke-width="0.7" opacity="0.7"/>
<path d="M925.0,405.4 L919.8,426.8" stroke="#6a665e" stroke-width="1" opacity="0.75"/>
<path d="M926.1,405.6 L921.0,427.1" stroke="#d6d2ca" stroke-width="0.7" opacity="0.7"/>
<path d="M928.4,405.9 L923.2,428.0" stroke="#6a665e" stroke-width="1" opacity="0.75"/>
<path d="M929.6,406.2 L924.4,428.3" stroke="#d6d2ca" stroke-width="0.7" opacity="0.7"/>
<path d="M931.9,406.5 L926.6,429.2" stroke="#6a665e" stroke-width="1" opacity="0.75"/>
<path d="M933.0,406.8 L927.9,429.6" stroke="#d6d2ca" stroke-width="0.7" opacity="0.7"/>
<path d="M935.3,407.0 L930.1,430.5" stroke="#6a665e" stroke-width="1" opacity="0.75"/>
<path d="M936.5,407.3 L931.3,430.8" stroke="#d6d2ca" stroke-width="0.7" opacity="0.7"/>
<path d="M938.8,407.6 L933.5,431.8" stroke="#6a665e" stroke-width="1" opacity="0.75"/>
<path d="M939.9,407.8 L934.8,432.1" stroke="#d6d2ca" stroke-width="0.7" opacity="0.7"/>
<polygon points="899.8,419.1 919.7,429.7 931.5,431 930.5,434.6 918.7,433.2 899,422.6" fill="#cfccc4" />
<polygon points="906.4,403.2 915.7,399.3 932.9,401.9 940.8,412.5 933,405.5 916,402.6" fill="#bdb9b1" />
<g filter="url(#b2)"><path d="M958.5,648 L960.5,670 A30.5,17 0 0 0 1022.5,668 L1020.5,646 Z" fill="#80837a"/><path d="M959.5,656 A31,18 0 0 0 1021.5,654" fill="none" stroke="#d6d6d0" stroke-width="3.6"/><path d="M960.5,667.5 A30.5,17 0 0 0 1022.5,665.5" fill="none" stroke="#c4c4be" stroke-width="4"/><path d="M962,676 A29,15 0 0 0 1021,674" fill="none" stroke="#9a9c95" stroke-width="3"/></g>
<path d="M952,618 L954,644 A32,24 0 0 0 1019.5,640 L1017.2,612 Z" fill="#74766e"/>
<path d="M952.2,621 A32.6,26 0 0 0 1017.4,617 L1017.8,623.5 A32.6,26 0 0 1 952.8,627.5 Z" fill="#dcdcd6"/>
<path d="M953.4,631.5 A32.6,26 0 0 0 1018.6,627.5 L1019.4,635.5 A32.6,26 0 0 1 954.2,639.5 Z" fill="#cfcfc8"/>
<path d="M952.5,624 A32.6,26 0 0 0 1017.6,620" fill="none" stroke="#8a8a84" stroke-width="4" stroke-dasharray="0.7 1.1" opacity="0.7"/><path d="M953.8,635.5 A32.6,26 0 0 0 1019,631.5" fill="none" stroke="#8a8a84" stroke-width="4.6" stroke-dasharray="0.7 1.1" opacity="0.7"/>
<ellipse cx="984.5" cy="616.5" rx="32.6" ry="26.2" fill="url(#wheel)" transform="rotate(-6 984.5 616.5)"/>
<path d="M984.5,616.5 L978,591 L988,590.6 Z" fill="#f0f0ee" opacity="0.85"/>
<path d="M984.5,616.5 L981,642.4 L992,642 Z" fill="#d4d4d2" opacity="0.7"/></g>
<g filter="url(#b2)"><path d="M643.5,421.5l5.7,-16.0 M648.2,423.6l3.0,-8.4 M652.9,425.7l3.0,-8.4 M657.6,427.8l3.0,-8.4 M662.3,429.8l3.0,-8.4 M667.0,431.9l4.2,-11.8 M671.7,434.0l3.0,-8.4 M676.3,436.1l3.0,-8.4 M681.0,438.2l3.0,-8.4 M685.7,440.3l3.0,-8.4 M690.4,442.3l5.7,-16.0 M695.1,444.4l3.0,-8.4 M699.8,446.5l3.0,-8.4 M704.5,448.6l3.0,-8.4" stroke="#464646" stroke-width="1.15" fill="none"/>
<path d="M674.6,375.9l-6.3,9.9 M685.7,380.7l-3.7,5.8 M696.8,385.5l-3.7,5.8 M707.9,390.3l-3.7,5.8 M719.0,395.1l-3.7,5.8 M730.1,399.9l-3.7,5.8 M741.2,404.7l-3.7,5.8" stroke="#5a5a5a" stroke-width="0.9" fill="none"/>
<path d="M985.0,585.5l3.8,-11.0 M989.5,587.8l3.8,-11.0 M994.0,590.1l3.8,-11.0 M998.5,592.5l6.8,-19.8 M1003.0,594.8l3.8,-11.0 M1007.4,597.1l3.8,-11.0 M1011.9,599.4l3.8,-11.0 M1016.4,601.7l3.8,-11.0 M1020.9,604.1l5.1,-14.9 M1025.4,606.4l3.8,-11.0 M1029.9,608.7l3.8,-11.0 M1034.4,611.0l3.8,-11.0 M1038.9,613.3l3.8,-11.0 M1043.4,615.7l6.8,-19.8 M1047.9,618.0l3.8,-11.0 M1052.3,620.3l3.8,-11.0 M1056.8,622.6l3.8,-11.0 M1061.3,624.9l3.8,-11.0 M1065.8,627.3l5.1,-14.9 M1070.3,629.6l3.8,-11.0 M1074.8,631.9l3.8,-11.0 M1079.3,634.2l3.8,-11.0 M1083.8,636.6l3.8,-11.0 M1088.3,638.9l6.8,-19.8 M1092.8,641.2l3.8,-11.0 M1097.2,643.5l3.8,-11.0 M1101.7,645.8l3.8,-11.0 M1106.2,648.2l3.8,-11.0 M1110.7,650.5l5.1,-14.9 M1115.2,652.8l3.8,-11.0 M1119.7,655.1l3.8,-11.0 M1124.2,657.4l3.8,-11.0 M1128.7,659.8l3.8,-11.0 M1133.2,662.1l6.8,-19.8 M1137.7,664.4l3.8,-11.0 M1142.1,666.7l3.8,-11.0 M1146.6,669.0l3.8,-11.0 M1151.1,671.4l3.8,-11.0 M1155.6,673.7l5.1,-14.9 M1160.1,676.0l3.8,-11.0" stroke="#464646" stroke-width="1.2" fill="none"/>
<path d="M1030.9,541.1l-4.8,7.4 M1042.8,546.7l-4.8,7.4 M1054.7,552.3l-4.8,7.4 M1066.6,557.9l-4.8,7.4 M1078.5,563.5l-4.8,7.4 M1090.4,569.1l-4.8,7.4 M1102.3,574.7l-4.8,7.4 M1114.2,580.3l-4.8,7.4 M1126.1,585.9l-6.7,10.4 M1138.0,591.5l-4.8,7.4 M1149.9,597.1l-4.8,7.4 M1161.8,602.7l-4.8,7.4" stroke="#5a5a5a" stroke-width="0.95" fill="none"/></g>
<text transform="matrix(0.63,0.295,-0.47,0.94,800.5,461.5)" font-size="48" style="font-family:'Liberation Mono',monospace;font-weight:400;letter-spacing:-6px" fill="#848a91" stroke="#848a91" stroke-width="1.1">16.64</text>
<text transform="matrix(0.85,0.39,-0.3,0.9,887,470.5)" font-size="8.5" style="font-family:'Liberation Sans',sans-serif;font-style:italic;font-weight:700" fill="#7a8086">mm</text>
<text transform="matrix(0.91,0.41,-0.3,0.95,763,483.5)" font-size="11.5" style="font-family:'Liberation Sans',sans-serif;font-style:italic;font-weight:700" fill="#f4f4f4">0</text>
<text transform="matrix(0.91,0.41,-0.3,0.95,803,496.5)" font-size="9.5" style="font-family:'Liberation Sans',sans-serif;font-style:italic;font-weight:700" fill="#f4f4f4">mm</text>
<text transform="matrix(0.91,0.41,-0.3,0.95,794,505.5)" font-size="9.5" style="font-family:'Liberation Sans',sans-serif;font-style:italic;font-weight:700" fill="#f4f4f4">in</text>
<text transform="matrix(0.91,0.41,-0.3,0.95,847,516)" font-size="9.5" style="font-family:'Liberation Sans',sans-serif;font-style:italic;font-weight:700" fill="#f4f4f4">ON</text>
<text transform="matrix(0.91,0.41,-0.3,0.95,842,527.5)" font-size="9.5" style="font-family:'Liberation Sans',sans-serif;font-style:italic;font-weight:700" fill="#f4f4f4">OFF</text>
<text transform="matrix(1.575,0.752,-0.3,0.9,654.5,395.5)" font-size="11.5" style="font-family:'Liberation Sans',sans-serif" fill="#3a3a3a">0</text>
<text transform="matrix(1.305,0.623,-0.3,0.9,682.5,415.5)" font-size="11.5" style="font-family:'Liberation Sans',sans-serif" fill="#3a3a3a">10</text>
<text transform="matrix(1.080,0.516,-0.3,0.9,675.5,390.3)" font-size="5.5" style="font-family:'Liberation Sans',sans-serif" fill="#666">1</text>
<text transform="matrix(1.080,0.516,-0.3,0.9,686.6,395.1)" font-size="5.5" style="font-family:'Liberation Sans',sans-serif" fill="#666">2</text>
<text transform="matrix(1.080,0.516,-0.3,0.9,697.7,399.90000000000003)" font-size="5.5" style="font-family:'Liberation Sans',sans-serif" fill="#666">3</text>
<text transform="matrix(1.080,0.516,-0.3,0.9,708.8,404.7)" font-size="5.5" style="font-family:'Liberation Sans',sans-serif" fill="#666">4</text>
<text transform="matrix(1.080,0.516,-0.3,0.9,719.9,409.5)" font-size="5.5" style="font-family:'Liberation Sans',sans-serif" fill="#666">5</text>
<text transform="matrix(1.080,0.516,-0.3,0.9,731.0,414.3)" font-size="5.5" style="font-family:'Liberation Sans',sans-serif" fill="#666">6</text>
<text transform="matrix(1.665,0.795,-0.3,0.9,1033,582)" font-size="12.5" style="font-family:'Liberation Sans',sans-serif" fill="#3c3c3c">90</text>
<text transform="matrix(1.548,0.740,-0.3,0.9,1074,601)" font-size="12.5" style="font-family:'Liberation Sans',sans-serif" fill="#3c3c3c">100</text>
<text transform="matrix(1.458,0.697,-0.3,0.9,1125,624.5)" font-size="12.5" style="font-family:'Liberation Sans',sans-serif" fill="#3c3c3c">110</text>
<text transform="matrix(1.575,0.752,-0.3,0.9,1107.5,603.5)" font-size="11" style="font-family:'Liberation Sans',sans-serif" fill="#3c3c3c">4</text>
<text transform="matrix(1.080,0.516,-0.3,0.9,1019.5,552.0)" font-size="6" style="font-family:'Liberation Sans',sans-serif" fill="#555">2</text>
<text transform="matrix(1.080,0.516,-0.3,0.9,1031.45,557.6)" font-size="6" style="font-family:'Liberation Sans',sans-serif" fill="#555">3</text>
<text transform="matrix(1.080,0.516,-0.3,0.9,1043.4,563.2)" font-size="6" style="font-family:'Liberation Sans',sans-serif" fill="#555">4</text>
<text transform="matrix(1.080,0.516,-0.3,0.9,1055.35,568.8)" font-size="6" style="font-family:'Liberation Sans',sans-serif" fill="#555">5</text>
<text transform="matrix(1.080,0.516,-0.3,0.9,1067.3,574.4)" font-size="6" style="font-family:'Liberation Sans',sans-serif" fill="#555">6</text>
<text transform="matrix(1.080,0.516,-0.3,0.9,1079.25,580.0)" font-size="6" style="font-family:'Liberation Sans',sans-serif" fill="#555">7</text>
<text transform="matrix(1.080,0.516,-0.3,0.9,1091.2,585.6)" font-size="6" style="font-family:'Liberation Sans',sans-serif" fill="#555">8</text>
<text transform="matrix(1.080,0.516,-0.3,0.9,1103.15,591.2)" font-size="6" style="font-family:'Liberation Sans',sans-serif" fill="#555">9</text>
<text transform="matrix(1.080,0.516,-0.3,0.9,1128.5,602.5)" font-size="6" style="font-family:'Liberation Sans',sans-serif" fill="#555">1</text>
<text transform="matrix(1.080,0.516,-0.3,0.9,1140.5,608.0)" font-size="6" style="font-family:'Liberation Sans',sans-serif" fill="#555">2</text>
<text transform="matrix(1.080,0.516,-0.3,0.9,1152.5,613.5)" font-size="6" style="font-family:'Liberation Sans',sans-serif" fill="#555">3</text>
</g></svg>
<svg style="left:399px;top:712.5px;" width="13" height="14" viewBox="0 0 13 14"><path d="M1.6 1.4H7.8L11 4.6V12.4H1.6Z" fill="#fff" stroke="#555" stroke-width="1.1" stroke-linejoin="round"/><path d="M7.6 1.6V4.8H10.8" fill="none" stroke="#555" stroke-width="1"/></svg>
<span class="t" id="t109" style="left:415.6px;top:713.60px;font-size:9px;line-height:13px;font-weight:400;color:#1a1a1a;-webkit-text-stroke:0.25px;">New</span>
<svg style="left:435.5px;top:717.5px;" width="8" height="5.2" viewBox="0 0 8 5.2"><path d="M1 1 L4.0 4.2 L7 1" fill="none" stroke="#888" stroke-width="1"/></svg>
<svg style="left:449.5px;top:713px;" width="13" height="13" viewBox="0 0 13 13"><path d="M9 1.4L11.4 3.8L4.4 10.8L2 8.4Z" fill="#4472c4"/><path d="M2 8.4L4.4 10.8L0.8 12Z" fill="#4472c4"/></svg>
<span class="t" id="t110" style="left:465.8px;top:713.60px;font-size:9px;line-height:13px;font-weight:400;color:#1a1a1a;transform:scaleX(1.0054);-webkit-text-stroke:0.25px;">Edit</span>
<svg style="left:488px;top:713.5px;" width="13" height="12" viewBox="0 0 13 12"><path d="M1.6 1.2L11 10.8M11 1.2L1.6 10.8" stroke="#d8262c" stroke-width="1.6"/></svg>
<span class="t" id="t111" style="left:504px;top:713.60px;font-size:9px;line-height:13px;font-weight:400;color:#1a1a1a;-webkit-text-stroke:0.25px;">Delete</span>
<span class="t" id="t112" style="left:857.7px;top:713.92px;font-size:8.4px;line-height:12px;font-weight:400;color:#222;transform:scaleX(0.9689);-webkit-text-stroke:0.25px;">Object3176.png</span>
<div style="left:918.5px;top:711px;width:1px;height:16.5px;background:#d0d0d0;"></div>
<div style="left:978.5px;top:711px;width:1px;height:16.5px;background:#d0d0d0;"></div>
<div style="left:1025.2px;top:711px;width:1px;height:16.5px;background:#d0d0d0;"></div>
<div style="left:1135px;top:711px;width:1px;height:16.5px;background:#d0d0d0;"></div>
<div style="left:1182.6px;top:711px;width:1px;height:16.5px;background:#d0d0d0;"></div>
<svg style="left:924.5px;top:712.5px;" width="15" height="14" viewBox="0 0 15 14"><path d="M1 7L7.6 1V4.6H14V9.4H7.6V13Z" fill="#4472c4"/></svg>
<span class="t" id="t113" style="left:943.6px;top:713.92px;font-size:8.4px;line-height:12px;font-weight:400;color:#222;transform:scaleX(0.8751);-webkit-text-stroke:0.25px;">1/1</span>
<svg style="left:959px;top:712.5px;" width="15" height="14" viewBox="0 0 15 14"><path d="M14 7L7.4 1V4.6H1V9.4H7.4V13Z" fill="#4472c4"/></svg>
<div style="left:982.5px;top:709.8px;width:17.8px;height:18.4px;background:#c9c9c9;border-radius:2px;"></div>
<svg style="left:984px;top:712px;" width="15" height="14" viewBox="0 0 15 14"><rect x="3.6" y="1" width="7.8" height="4" fill="#fff" stroke="#666" stroke-width="1"/><rect x="1" y="4.6" width="13" height="6" rx="1.2" fill="#fff" stroke="#666" stroke-width="1"/><rect x="3.6" y="8" width="7.8" height="5" fill="#dfe8f8" stroke="#666" stroke-width="1"/><rect x="5" y="9.6" width="5" height="2" fill="#8faee6"/></svg>
<div style="left:1003.4px;top:709.8px;width:18.4px;height:18.4px;background:#c9c9c9;border-radius:2px;"></div>
<svg style="left:1005.5px;top:711.5px;" width="15" height="15" viewBox="0 0 15 15"><path d="M11.8 6.6L7 11.4A2.5 2.5 0 0 1 3.4 7.8L8.6 2.6A1.7 1.7 0 0 1 11 5L6.2 9.8A0.8 0.8 0 0 1 5 8.6L9.2 4.4" fill="none" stroke="#4a78c8" stroke-width="1.2"/></svg>
<div style="left:1028.5px;top:709.8px;width:18.4px;height:18.4px;background:#c9c9c9;border-radius:2px;"></div>
<svg style="left:1030.5px;top:711.5px;" width="15" height="15" viewBox="0 0 15 15"><rect x="1" y="3.4" width="10" height="10" fill="#fff" stroke="#666" stroke-width="1" stroke-dasharray="1.4 1"/><path d="M1.8 12.6V10.6L4.6 7.6L6.8 10L8.2 8.6L10.4 11V12.6Z" fill="#3aa6b4"/><circle cx="8" cy="6" r="1" fill="#f0a030"/><path d="M13.4 1.2V12M11.8 2.8L13.4 1.2L15 2.8" fill="none" stroke="#4472c4" stroke-width="1"/></svg>
<svg style="left:1052.5px;top:712px;" width="14" height="14" viewBox="0 0 14 14"><circle cx="8" cy="5.8" r="4.4" fill="#fff" stroke="#b4b4b4" stroke-width="1.1"/><path d="M4.8 9L1.2 12.6" stroke="#b4b4b4" stroke-width="1.6"/><path d="M6 5.8H10" stroke="#b4b4b4" stroke-width="1"/></svg>
<div style="left:1070.9px;top:711.7px;width:40.8px;height:15.3px;background:#fff;border:1.4px solid #3c8ce0;border-radius:2.5px;box-sizing:border-box;"></div>
<span class="t" id="t114" style="left:1074.2px;top:713.48px;font-size:9.3px;line-height:13px;font-weight:700;color:#222;transform:scaleX(0.9834);-webkit-text-stroke:0.25px;">97%</span>
<svg style="left:1116.5px;top:712px;" width="14" height="14" viewBox="0 0 14 14"><circle cx="8" cy="5.8" r="4.4" fill="#fff" stroke="#b4b4b4" stroke-width="1.1"/><path d="M4.8 9L1.2 12.6" stroke="#b4b4b4" stroke-width="1.6"/><path d="M6 5.8H10M8 3.8V7.8" stroke="#b4b4b4" stroke-width="1"/></svg>
<svg style="left:1141px;top:712.5px;" width="14" height="14" viewBox="0 0 12.4 13"><rect x="1" y="0.8" width="10.4" height="11.4" rx="1" fill="#fff" stroke="#666" stroke-width="1"/><path d="M3 3.6H4.2M3 6.5H4.2M3 9.4H4.2" stroke="#4472c4" stroke-width="1.4"/><path d="M5.6 3.6H9.6M5.6 6.5H9.6M5.6 9.4H9.6" stroke="#666" stroke-width="1"/></svg>
<div style="left:1160.4px;top:709.8px;width:18.4px;height:18.4px;background:#c9c9c9;border-radius:2px;"></div>
<svg style="left:1162.5px;top:712px;" width="15" height="15" viewBox="0 0 15 15"><path d="M1.2 1.4H13V9.6H6L3.6 12.4V9.6H1.2Z" fill="#fff" stroke="#666" stroke-width="1.1" stroke-linejoin="round"/><rect x="3.4" y="3.4" width="7.4" height="1.4" fill="#7a98d8"/><rect x="3.4" y="6" width="5.4" height="1.4" fill="#7a98d8"/></svg>
<svg style="left:1187.6px;top:713px;" width="13.6" height="11.6" viewBox="0 0 19 16"><rect x="0.8" y="0.8" width="17.4" height="14.4" fill="#fff" stroke="#666" stroke-width="1.3"/><path d="M1.6 14.4V11L6.4 5.6L10.2 10L12.6 7.6L17.4 12.6V14.4Z" fill="#3aa6b4"/><circle cx="13.6" cy="4.6" r="1.7" fill="#f0a030"/></svg>
<svg style="left:1209px;top:713px;" width="13.6" height="11.6" viewBox="0 0 19 16"><rect x="0.8" y="0.8" width="17.4" height="14.4" fill="#fff" stroke="#666" stroke-width="1.3"/><path d="M1.6 14.4V11L6.4 5.6L10.2 10L12.6 7.6L17.4 12.6V14.4Z" fill="#3aa6b4"/><circle cx="13.6" cy="4.6" r="1.7" fill="#f0a030"/><path d="M17.6 5L9.6 14.4" stroke="#fff" stroke-width="3.2"/><path d="M17.6 4.6L9.6 14.4" stroke="#4472c4" stroke-width="1.7"/></svg>
<div style="left:351px;top:739.5px;width:889px;height:35px;background:#ebebeb;"></div>
<div style="left:351px;top:739.5px;width:889px;height:1px;background:#dcdcdc;"></div>
<span class="t" id="t115" style="left:360px;top:751.00px;font-size:9px;line-height:13px;font-weight:400;color:#1a1a1a;transform:scaleX(1.0376);-webkit-text-stroke:0.25px;">Mode: Edit, Tenant 'Mandant 1'</span>
<div style="left:893.6px;top:747.2px;width:63.8px;height:19.2px;background:#fff;border:1px solid #c6c6c6;border-radius:3px;box-sizing:border-box;"></div>
<div style="left:962.3px;top:747.2px;width:64.1px;height:19.2px;background:#fff;border:1px solid #c6c6c6;border-radius:3px;box-sizing:border-box;"></div>
<div style="left:1031.3px;top:747.2px;width:63.7px;height:19.2px;background:#fff;border:1px solid #c6c6c6;border-radius:3px;box-sizing:border-box;"></div>
<div style="left:1100px;top:747.2px;width:63.8px;height:19.2px;background:#fff;border:1px solid #c6c6c6;border-radius:3px;box-sizing:border-box;"></div>
<div style="left:1169.2px;top:747.2px;width:63.3px;height:19.2px;background:#5ab51e;border:1px solid #5ab51e;border-radius:3px;box-sizing:border-box;"></div>
<svg style="left:898px;top:750px;" width="14" height="13.2" viewBox="0 0 15 14"><rect x="3.6" y="1" width="7.8" height="4" fill="#fff" stroke="#666" stroke-width="1"/><rect x="1" y="4.6" width="13" height="6" rx="1.2" fill="#fff" stroke="#666" stroke-width="1"/><rect x="3.6" y="8" width="7.8" height="5" fill="#dfe8f8" stroke="#666" stroke-width="1"/><rect x="5" y="9.6" width="5" height="2" fill="#8faee6"/></svg>
<span class="t" id="t116" style="left:923px;top:750.98px;font-size:9.3px;line-height:13px;font-weight:400;color:#1a1a1a;transform:scaleX(1.0458);-webkit-text-stroke:0.25px;"><u>P</u>rint</span>
<svg style="left:967.2px;top:751.6px;" width="14" height="10.4" viewBox="0 0 14.4 10.6"><rect x="1" y="1" width="12.4" height="8.6" fill="#fff" stroke="#555" stroke-width="1"/><path d="M1.2 1.4L7.2 6L13.2 1.4" fill="none" stroke="#555" stroke-width="1"/></svg>
<span class="t" id="t117" style="left:992px;top:750.98px;font-size:9.3px;line-height:13px;font-weight:400;color:#1a1a1a;transform:scaleX(0.9485);-webkit-text-stroke:0.25px;"><u>S</u>end</span>
<svg style="left:1036.2px;top:750.2px;" width="13.4" height="13.4" viewBox="0 0 13.4 13.4"><path d="M0.8 0.8H12.6V12.6H0.8Z" fill="#555"/><rect x="3" y="0.8" width="7" height="4.6" fill="#e8e8e8"/><rect x="3" y="1.6" width="7" height="2.2" fill="#e05058"/><rect x="2.6" y="7.4" width="8.2" height="5.2" fill="#f2f2f2"/><rect x="4" y="8.6" width="2.2" height="3.2" fill="#555"/></svg>
<span class="t" id="t118" style="left:1056px;top:750.98px;font-size:9.3px;line-height:13px;font-weight:400;color:#1a1a1a;transform:scaleX(1.0409);-webkit-text-stroke:0.25px;"><u>A</u>ccept</span>
<svg style="left:1105.5px;top:751px;" width="12.4" height="12" viewBox="0 0 12.4 12"><path d="M1.4 1.2L10.8 10.6M10.8 1.2L1.4 10.6" stroke="#d8262c" stroke-width="1.6"/></svg>
<span class="t" id="t119" style="left:1125.5px;top:750.98px;font-size:9.3px;line-height:13px;font-weight:400;color:#1a1a1a;transform:scaleX(0.9947);-webkit-text-stroke:0.25px;"><u>C</u>ancel</span>
<span class="t" id="t120" style="left:1195.7px;top:750.98px;font-size:9.3px;line-height:13px;font-weight:400;color:#fff;transform:scaleX(0.9251);-webkit-text-stroke:0.25px;"><u>O</u>k</span>
</body></html>
